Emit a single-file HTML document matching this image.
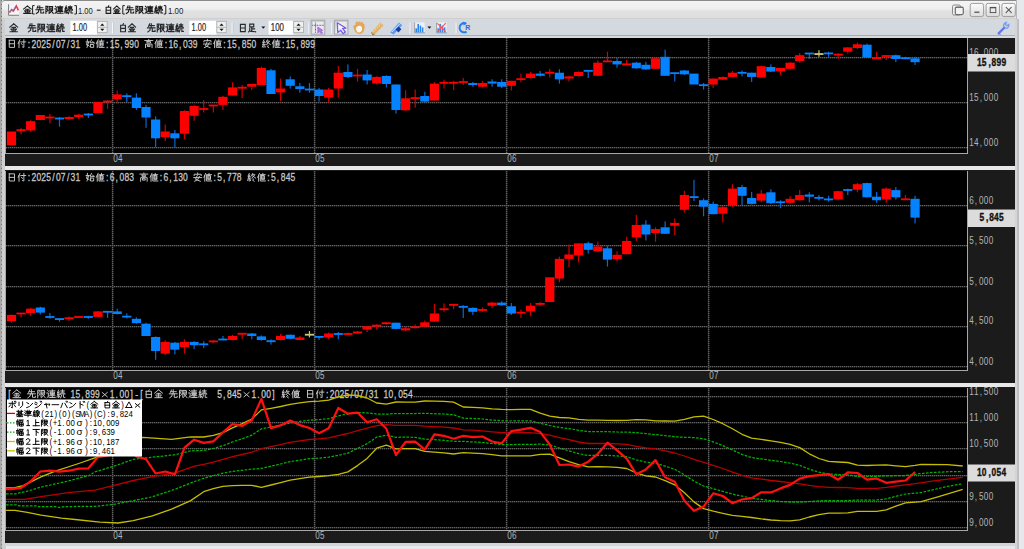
<!DOCTYPE html>
<html><head><meta charset="utf-8"><style>
*{margin:0;padding:0;box-sizing:border-box}
html,body{width:1024px;height:549px;overflow:hidden;background:#e6e8ec;font-family:"Liberation Sans",sans-serif}
.a{position:absolute}
</style></head><body>
<div class="a" style="left:0;top:0;width:1px;height:549px;background:#a8a8a8"></div>
<div class="a" style="left:1px;top:0;width:1px;height:549px;background:repeating-linear-gradient(180deg,#6878b8 0 1px,#a0b0c0 1px 2px,#c0b070 2px 3px,#a8a8a8 3px 4px)"></div>
<div class="a" style="left:2px;top:19px;width:4px;height:530px;background:#cfcfcf"></div>
<div class="a" style="left:2px;top:0;width:1014px;height:19px;background:linear-gradient(#f3f3f3 0,#efefef 45%,#e2e2e2 55%,#dedede 92%,#c8c8c8 100%);border-top:1px solid #8a8a8a;border-radius:3px 0 0 0"></div>
<div class="a" style="left:5px;top:19px;width:1011px;height:19px;background:#d4d9e0;border-bottom:3px solid #d6dadf"></div>
<div class="a" style="left:5px;top:35px;width:1011px;height:1px;background:#a6aeb8"></div>
<div class="a" style="left:5px;top:38px;width:1010px;height:505px;background:#1b1b1b"></div>
<div class="a" style="left:5px;top:166px;width:1010px;height:4px;background:#e8e8e8"></div>
<div class="a" style="left:5px;top:383px;width:1010px;height:4px;background:#e8e8e8"></div>
<div class="a" style="left:1015px;top:19px;width:2px;height:530px;background:#d4d4d4"></div>
<div class="a" style="left:1016px;top:0;width:1px;height:19px;background:#b8b8b8"></div>
<div class="a" style="left:1017px;top:19px;width:2px;height:530px;background:#c0c0c4"></div>
<div class="a" style="left:5px;top:543px;width:1012px;height:3px;background:#d4d4d4"></div>
<svg class="a" style="left:0;top:0" width="1024" height="549" viewBox="0 0 1024 549">
<rect x="6" y="38" width="961" height="115" fill="#000"/>
<rect x="6" y="171" width="961" height="199" fill="#000"/>
<rect x="6" y="388" width="961" height="142" fill="#000"/>
<line x1="6" y1="57.6" x2="967" y2="57.6" stroke="#2c2c2c" stroke-width="1.4"/><line x1="6" y1="57.6" x2="967" y2="57.6" stroke="#626262" stroke-width="1.4" stroke-dasharray="1 1"/>
<line x1="6" y1="102.6" x2="967" y2="102.6" stroke="#2c2c2c" stroke-width="1.4"/><line x1="6" y1="102.6" x2="967" y2="102.6" stroke="#626262" stroke-width="1.4" stroke-dasharray="1 1"/>
<line x1="6" y1="147.6" x2="967" y2="147.6" stroke="#2c2c2c" stroke-width="1.4"/><line x1="6" y1="147.6" x2="967" y2="147.6" stroke="#626262" stroke-width="1.4" stroke-dasharray="1 1"/>
<line x1="6" y1="205.6" x2="967" y2="205.6" stroke="#2c2c2c" stroke-width="1.4"/><line x1="6" y1="205.6" x2="967" y2="205.6" stroke="#626262" stroke-width="1.4" stroke-dasharray="1 1"/>
<line x1="6" y1="245.6" x2="967" y2="245.6" stroke="#2c2c2c" stroke-width="1.4"/><line x1="6" y1="245.6" x2="967" y2="245.6" stroke="#626262" stroke-width="1.4" stroke-dasharray="1 1"/>
<line x1="6" y1="286.6" x2="967" y2="286.6" stroke="#2c2c2c" stroke-width="1.4"/><line x1="6" y1="286.6" x2="967" y2="286.6" stroke="#626262" stroke-width="1.4" stroke-dasharray="1 1"/>
<line x1="6" y1="326.6" x2="967" y2="326.6" stroke="#2c2c2c" stroke-width="1.4"/><line x1="6" y1="326.6" x2="967" y2="326.6" stroke="#626262" stroke-width="1.4" stroke-dasharray="1 1"/>
<line x1="6" y1="366.6" x2="967" y2="366.6" stroke="#2c2c2c" stroke-width="1.4"/><line x1="6" y1="366.6" x2="967" y2="366.6" stroke="#626262" stroke-width="1.4" stroke-dasharray="1 1"/>
<line x1="6" y1="396.6" x2="967" y2="396.6" stroke="#2c2c2c" stroke-width="1.4"/><line x1="6" y1="396.6" x2="967" y2="396.6" stroke="#626262" stroke-width="1.4" stroke-dasharray="1 1"/>
<line x1="6" y1="422.6" x2="967" y2="422.6" stroke="#2c2c2c" stroke-width="1.4"/><line x1="6" y1="422.6" x2="967" y2="422.6" stroke="#626262" stroke-width="1.4" stroke-dasharray="1 1"/>
<line x1="6" y1="448.6" x2="967" y2="448.6" stroke="#2c2c2c" stroke-width="1.4"/><line x1="6" y1="448.6" x2="967" y2="448.6" stroke="#626262" stroke-width="1.4" stroke-dasharray="1 1"/>
<line x1="6" y1="475.6" x2="967" y2="475.6" stroke="#2c2c2c" stroke-width="1.4"/><line x1="6" y1="475.6" x2="967" y2="475.6" stroke="#626262" stroke-width="1.4" stroke-dasharray="1 1"/>
<line x1="6" y1="501.6" x2="967" y2="501.6" stroke="#2c2c2c" stroke-width="1.4"/><line x1="6" y1="501.6" x2="967" y2="501.6" stroke="#626262" stroke-width="1.4" stroke-dasharray="1 1"/>
<line x1="6" y1="527.6" x2="967" y2="527.6" stroke="#2c2c2c" stroke-width="1.4"/><line x1="6" y1="527.6" x2="967" y2="527.6" stroke="#626262" stroke-width="1.4" stroke-dasharray="1 1"/>
<line x1="112.6" y1="38" x2="112.6" y2="153" stroke="#2c2c2c" stroke-width="1.4"/><line x1="112.6" y1="38" x2="112.6" y2="153" stroke="#626262" stroke-width="1.4" stroke-dasharray="1 1"/>
<line x1="112.6" y1="171" x2="112.6" y2="370" stroke="#2c2c2c" stroke-width="1.4"/><line x1="112.6" y1="171" x2="112.6" y2="370" stroke="#626262" stroke-width="1.4" stroke-dasharray="1 1"/>
<line x1="112.6" y1="388" x2="112.6" y2="530" stroke="#2c2c2c" stroke-width="1.4"/><line x1="112.6" y1="388" x2="112.6" y2="530" stroke="#626262" stroke-width="1.4" stroke-dasharray="1 1"/>
<line x1="314.6" y1="38" x2="314.6" y2="153" stroke="#2c2c2c" stroke-width="1.4"/><line x1="314.6" y1="38" x2="314.6" y2="153" stroke="#626262" stroke-width="1.4" stroke-dasharray="1 1"/>
<line x1="314.6" y1="171" x2="314.6" y2="370" stroke="#2c2c2c" stroke-width="1.4"/><line x1="314.6" y1="171" x2="314.6" y2="370" stroke="#626262" stroke-width="1.4" stroke-dasharray="1 1"/>
<line x1="314.6" y1="388" x2="314.6" y2="530" stroke="#2c2c2c" stroke-width="1.4"/><line x1="314.6" y1="388" x2="314.6" y2="530" stroke="#626262" stroke-width="1.4" stroke-dasharray="1 1"/>
<line x1="506.6" y1="38" x2="506.6" y2="153" stroke="#2c2c2c" stroke-width="1.4"/><line x1="506.6" y1="38" x2="506.6" y2="153" stroke="#626262" stroke-width="1.4" stroke-dasharray="1 1"/>
<line x1="506.6" y1="171" x2="506.6" y2="370" stroke="#2c2c2c" stroke-width="1.4"/><line x1="506.6" y1="171" x2="506.6" y2="370" stroke="#626262" stroke-width="1.4" stroke-dasharray="1 1"/>
<line x1="506.6" y1="388" x2="506.6" y2="530" stroke="#2c2c2c" stroke-width="1.4"/><line x1="506.6" y1="388" x2="506.6" y2="530" stroke="#626262" stroke-width="1.4" stroke-dasharray="1 1"/>
<line x1="708.6" y1="38" x2="708.6" y2="153" stroke="#2c2c2c" stroke-width="1.4"/><line x1="708.6" y1="38" x2="708.6" y2="153" stroke="#626262" stroke-width="1.4" stroke-dasharray="1 1"/>
<line x1="708.6" y1="171" x2="708.6" y2="370" stroke="#2c2c2c" stroke-width="1.4"/><line x1="708.6" y1="171" x2="708.6" y2="370" stroke="#626262" stroke-width="1.4" stroke-dasharray="1 1"/>
<line x1="708.6" y1="388" x2="708.6" y2="530" stroke="#2c2c2c" stroke-width="1.4"/><line x1="708.6" y1="388" x2="708.6" y2="530" stroke="#626262" stroke-width="1.4" stroke-dasharray="1 1"/>
<rect x="5" y="38" width="1" height="116" fill="#a8a8a8"/><rect x="967" y="38" width="1" height="116" fill="#a8a8a8"/><rect x="5" y="153" width="963" height="1" fill="#a8a8a8"/>
<rect x="5" y="171" width="1" height="200" fill="#a8a8a8"/><rect x="967" y="171" width="1" height="200" fill="#a8a8a8"/><rect x="5" y="370" width="963" height="1" fill="#a8a8a8"/>
<rect x="5" y="388" width="1" height="143" fill="#a8a8a8"/><rect x="967" y="388" width="1" height="143" fill="#a8a8a8"/><rect x="5" y="530" width="963" height="1" fill="#a8a8a8"/>
<rect x="6.85" y="131.50" width="9.2" height="13.80" fill="#ff0000"/>
<rect x="20.46" y="127.80" width="1.2" height="6.60" fill="#d00000"/>
<rect x="16.46" y="129.25" width="9.2" height="1.80" fill="#ff0000"/>
<rect x="30.07" y="120.20" width="1.2" height="11.50" fill="#d00000"/>
<rect x="26.07" y="121.20" width="9.2" height="9.20" fill="#ff0000"/>
<rect x="35.69" y="115.00" width="9.2" height="5.00" fill="#ff0000"/>
<rect x="49.30" y="114.00" width="1.2" height="9.40" fill="#d00000"/>
<rect x="45.30" y="116.60" width="9.2" height="1.80" fill="#ff0000"/>
<rect x="58.91" y="117.00" width="1.2" height="9.70" fill="#0868d8"/>
<rect x="54.91" y="117.60" width="9.2" height="1.80" fill="#0582ff"/>
<rect x="68.52" y="116.00" width="1.2" height="4.00" fill="#d00000"/>
<rect x="64.52" y="117.00" width="9.2" height="2.00" fill="#ff0000"/>
<rect x="78.14" y="114.00" width="1.2" height="5.00" fill="#d00000"/>
<rect x="74.14" y="114.70" width="9.2" height="2.30" fill="#ff0000"/>
<rect x="87.75" y="113.00" width="1.2" height="5.00" fill="#0868d8"/>
<rect x="83.75" y="113.60" width="9.2" height="1.80" fill="#0582ff"/>
<rect x="93.36" y="102.00" width="9.2" height="11.00" fill="#ff0000"/>
<rect x="106.98" y="100.00" width="1.2" height="8.80" fill="#d00000"/>
<rect x="102.98" y="100.60" width="9.2" height="1.80" fill="#ff0000"/>
<rect x="116.59" y="90.60" width="1.2" height="12.70" fill="#d00000"/>
<rect x="112.59" y="94.40" width="9.2" height="5.00" fill="#ff0000"/>
<rect x="126.20" y="93.30" width="1.2" height="8.70" fill="#0868d8"/>
<rect x="122.20" y="95.25" width="9.2" height="1.80" fill="#0582ff"/>
<rect x="135.82" y="93.30" width="1.2" height="16.60" fill="#0868d8"/>
<rect x="131.82" y="97.60" width="9.2" height="10.40" fill="#0582ff"/>
<rect x="145.43" y="104.80" width="1.2" height="23.00" fill="#0868d8"/>
<rect x="141.43" y="107.00" width="9.2" height="10.50" fill="#0582ff"/>
<rect x="155.04" y="116.40" width="1.2" height="30.60" fill="#0868d8"/>
<rect x="151.04" y="119.50" width="9.2" height="18.80" fill="#0582ff"/>
<rect x="164.65" y="124.50" width="1.2" height="16.50" fill="#d00000"/>
<rect x="160.65" y="131.50" width="9.2" height="5.70" fill="#ff0000"/>
<rect x="174.27" y="130.00" width="1.2" height="18.00" fill="#0868d8"/>
<rect x="170.27" y="133.30" width="9.2" height="5.00" fill="#0582ff"/>
<rect x="183.88" y="110.30" width="1.2" height="28.90" fill="#d00000"/>
<rect x="179.88" y="111.00" width="9.2" height="22.70" fill="#ff0000"/>
<rect x="193.49" y="104.80" width="1.2" height="16.00" fill="#d00000"/>
<rect x="189.49" y="106.00" width="9.2" height="9.80" fill="#ff0000"/>
<rect x="203.11" y="100.00" width="1.2" height="12.50" fill="#d00000"/>
<rect x="199.11" y="108.10" width="9.2" height="1.80" fill="#ff0000"/>
<rect x="212.72" y="105.00" width="1.2" height="7.50" fill="#d00000"/>
<rect x="208.72" y="104.60" width="9.2" height="1.80" fill="#ff0000"/>
<rect x="222.33" y="96.00" width="1.2" height="14.00" fill="#d00000"/>
<rect x="218.33" y="96.80" width="9.2" height="8.10" fill="#ff0000"/>
<rect x="231.95" y="82.30" width="1.2" height="13.20" fill="#d00000"/>
<rect x="227.95" y="87.40" width="9.2" height="8.10" fill="#ff0000"/>
<rect x="241.56" y="85.00" width="1.2" height="13.00" fill="#d00000"/>
<rect x="237.56" y="86.80" width="9.2" height="1.80" fill="#ff0000"/>
<rect x="251.17" y="84.00" width="1.2" height="6.00" fill="#d00000"/>
<rect x="247.17" y="84.00" width="9.2" height="2.70" fill="#ff0000"/>
<rect x="260.78" y="66.60" width="1.2" height="18.40" fill="#d00000"/>
<rect x="256.78" y="68.00" width="9.2" height="17.00" fill="#ff0000"/>
<rect x="270.40" y="68.80" width="1.2" height="25.20" fill="#0868d8"/>
<rect x="266.40" y="70.30" width="9.2" height="23.70" fill="#0582ff"/>
<rect x="280.01" y="78.60" width="1.2" height="22.40" fill="#d00000"/>
<rect x="276.01" y="88.50" width="9.2" height="3.90" fill="#ff0000"/>
<rect x="289.62" y="76.40" width="1.2" height="12.10" fill="#0868d8"/>
<rect x="285.62" y="79.30" width="9.2" height="6.50" fill="#0582ff"/>
<rect x="299.24" y="83.00" width="1.2" height="9.80" fill="#0868d8"/>
<rect x="295.24" y="86.30" width="9.2" height="2.70" fill="#0582ff"/>
<rect x="308.85" y="83.00" width="1.2" height="9.80" fill="#0868d8"/>
<rect x="304.85" y="88.60" width="9.2" height="1.80" fill="#0582ff"/>
<rect x="318.46" y="87.80" width="1.2" height="13.80" fill="#0868d8"/>
<rect x="314.46" y="89.50" width="9.2" height="6.50" fill="#0582ff"/>
<rect x="328.08" y="87.80" width="1.2" height="14.90" fill="#d00000"/>
<rect x="324.08" y="89.50" width="9.2" height="8.10" fill="#ff0000"/>
<rect x="337.69" y="66.00" width="1.2" height="31.60" fill="#d00000"/>
<rect x="333.69" y="72.70" width="9.2" height="15.80" fill="#ff0000"/>
<rect x="347.30" y="64.40" width="1.2" height="13.60" fill="#0868d8"/>
<rect x="343.30" y="72.00" width="9.2" height="5.00" fill="#0582ff"/>
<rect x="356.91" y="68.80" width="1.2" height="12.70" fill="#d00000"/>
<rect x="352.91" y="74.60" width="9.2" height="1.80" fill="#ff0000"/>
<rect x="366.53" y="70.00" width="1.2" height="14.50" fill="#0868d8"/>
<rect x="362.53" y="74.50" width="9.2" height="5.90" fill="#0582ff"/>
<rect x="376.14" y="76.40" width="1.2" height="8.10" fill="#d00000"/>
<rect x="372.14" y="76.90" width="9.2" height="6.50" fill="#ff0000"/>
<rect x="385.75" y="75.30" width="1.2" height="12.10" fill="#0868d8"/>
<rect x="381.75" y="76.00" width="9.2" height="8.00" fill="#0582ff"/>
<rect x="395.37" y="84.50" width="1.2" height="29.10" fill="#0868d8"/>
<rect x="391.37" y="84.50" width="9.2" height="25.50" fill="#0582ff"/>
<rect x="404.98" y="90.20" width="1.2" height="20.80" fill="#d00000"/>
<rect x="400.98" y="98.30" width="9.2" height="12.00" fill="#ff0000"/>
<rect x="414.59" y="89.50" width="1.2" height="18.20" fill="#d00000"/>
<rect x="410.59" y="97.20" width="9.2" height="1.80" fill="#ff0000"/>
<rect x="424.21" y="91.70" width="1.2" height="11.00" fill="#0868d8"/>
<rect x="420.21" y="96.00" width="9.2" height="5.60" fill="#0582ff"/>
<rect x="433.82" y="82.30" width="1.2" height="18.20" fill="#d00000"/>
<rect x="429.82" y="83.60" width="9.2" height="16.90" fill="#ff0000"/>
<rect x="443.43" y="79.70" width="1.2" height="8.80" fill="#d00000"/>
<rect x="439.43" y="81.90" width="9.2" height="1.80" fill="#ff0000"/>
<rect x="453.04" y="80.80" width="1.2" height="9.40" fill="#d00000"/>
<rect x="449.04" y="81.90" width="9.2" height="1.80" fill="#ff0000"/>
<rect x="462.66" y="78.00" width="1.2" height="7.00" fill="#d00000"/>
<rect x="458.66" y="81.10" width="9.2" height="1.80" fill="#ff0000"/>
<rect x="472.27" y="82.00" width="1.2" height="4.70" fill="#0868d8"/>
<rect x="468.27" y="83.00" width="9.2" height="2.00" fill="#0582ff"/>
<rect x="481.88" y="80.80" width="1.2" height="6.60" fill="#d00000"/>
<rect x="477.88" y="83.00" width="9.2" height="3.70" fill="#ff0000"/>
<rect x="491.50" y="79.30" width="1.2" height="7.40" fill="#0868d8"/>
<rect x="487.50" y="81.50" width="9.2" height="2.10" fill="#0582ff"/>
<rect x="501.11" y="79.30" width="1.2" height="8.70" fill="#0868d8"/>
<rect x="497.11" y="82.00" width="9.2" height="4.70" fill="#0582ff"/>
<rect x="510.72" y="80.80" width="1.2" height="9.80" fill="#d00000"/>
<rect x="506.72" y="80.80" width="9.2" height="5.00" fill="#ff0000"/>
<rect x="520.34" y="73.60" width="1.2" height="8.70" fill="#d00000"/>
<rect x="516.34" y="78.25" width="9.2" height="1.80" fill="#ff0000"/>
<rect x="529.95" y="72.00" width="1.2" height="6.60" fill="#d00000"/>
<rect x="525.95" y="73.60" width="9.2" height="4.40" fill="#ff0000"/>
<rect x="539.56" y="71.00" width="1.2" height="5.40" fill="#0868d8"/>
<rect x="535.56" y="73.60" width="9.2" height="2.20" fill="#0582ff"/>
<rect x="549.17" y="68.80" width="1.2" height="8.70" fill="#d00000"/>
<rect x="545.17" y="71.90" width="9.2" height="1.80" fill="#ff0000"/>
<rect x="558.79" y="69.20" width="1.2" height="14.40" fill="#0868d8"/>
<rect x="554.79" y="72.70" width="9.2" height="6.60" fill="#0582ff"/>
<rect x="568.40" y="76.40" width="1.2" height="5.10" fill="#d00000"/>
<rect x="564.40" y="76.40" width="9.2" height="2.20" fill="#ff0000"/>
<rect x="578.01" y="71.40" width="1.2" height="5.00" fill="#d00000"/>
<rect x="574.01" y="72.00" width="9.2" height="4.00" fill="#ff0000"/>
<rect x="587.63" y="70.00" width="1.2" height="8.00" fill="#0868d8"/>
<rect x="583.63" y="69.95" width="9.2" height="1.80" fill="#0582ff"/>
<rect x="597.24" y="60.50" width="1.2" height="15.30" fill="#d00000"/>
<rect x="593.24" y="62.70" width="9.2" height="13.10" fill="#ff0000"/>
<rect x="606.85" y="51.70" width="1.2" height="10.50" fill="#d00000"/>
<rect x="602.85" y="60.45" width="9.2" height="1.80" fill="#ff0000"/>
<rect x="616.47" y="58.30" width="1.2" height="9.40" fill="#0868d8"/>
<rect x="612.47" y="61.00" width="9.2" height="3.40" fill="#0582ff"/>
<rect x="626.08" y="60.00" width="1.2" height="5.50" fill="#d00000"/>
<rect x="622.08" y="63.40" width="9.2" height="1.80" fill="#ff0000"/>
<rect x="635.69" y="61.80" width="1.2" height="7.00" fill="#0868d8"/>
<rect x="631.69" y="62.70" width="9.2" height="5.60" fill="#0582ff"/>
<rect x="645.30" y="61.80" width="1.2" height="8.20" fill="#0868d8"/>
<rect x="641.30" y="64.80" width="9.2" height="4.60" fill="#0582ff"/>
<rect x="654.92" y="57.90" width="1.2" height="10.90" fill="#d00000"/>
<rect x="650.92" y="58.30" width="9.2" height="10.50" fill="#ff0000"/>
<rect x="664.53" y="49.60" width="1.2" height="26.20" fill="#0868d8"/>
<rect x="660.53" y="56.80" width="9.2" height="19.00" fill="#0582ff"/>
<rect x="674.14" y="72.70" width="1.2" height="8.80" fill="#0868d8"/>
<rect x="670.14" y="72.25" width="9.2" height="1.80" fill="#0582ff"/>
<rect x="683.76" y="70.00" width="1.2" height="5.00" fill="#0868d8"/>
<rect x="679.76" y="70.50" width="9.2" height="3.80" fill="#0582ff"/>
<rect x="689.37" y="73.60" width="9.2" height="10.90" fill="#0582ff"/>
<rect x="702.98" y="83.00" width="1.2" height="6.50" fill="#0868d8"/>
<rect x="698.98" y="84.25" width="9.2" height="1.80" fill="#0582ff"/>
<rect x="712.60" y="78.60" width="1.2" height="9.40" fill="#d00000"/>
<rect x="708.60" y="78.60" width="9.2" height="5.90" fill="#ff0000"/>
<rect x="722.21" y="76.40" width="1.2" height="3.60" fill="#d00000"/>
<rect x="718.21" y="77.00" width="9.2" height="2.70" fill="#ff0000"/>
<rect x="731.82" y="71.00" width="1.2" height="5.90" fill="#d00000"/>
<rect x="727.82" y="72.70" width="9.2" height="4.20" fill="#ff0000"/>
<rect x="741.43" y="70.50" width="1.2" height="5.90" fill="#0868d8"/>
<rect x="737.43" y="71.90" width="9.2" height="1.80" fill="#0582ff"/>
<rect x="751.05" y="72.70" width="1.2" height="9.30" fill="#0868d8"/>
<rect x="747.05" y="72.70" width="9.2" height="4.20" fill="#0582ff"/>
<rect x="760.66" y="65.50" width="1.2" height="12.00" fill="#d00000"/>
<rect x="756.66" y="66.20" width="9.2" height="11.30" fill="#ff0000"/>
<rect x="770.27" y="64.40" width="1.2" height="7.60" fill="#0868d8"/>
<rect x="766.27" y="67.00" width="9.2" height="4.60" fill="#0582ff"/>
<rect x="779.89" y="68.00" width="1.2" height="7.00" fill="#d00000"/>
<rect x="775.89" y="68.00" width="9.2" height="3.40" fill="#ff0000"/>
<rect x="789.50" y="62.20" width="1.2" height="7.00" fill="#d00000"/>
<rect x="785.50" y="62.70" width="9.2" height="6.10" fill="#ff0000"/>
<rect x="799.11" y="53.00" width="1.2" height="9.70" fill="#d00000"/>
<rect x="795.11" y="55.20" width="9.2" height="5.80" fill="#ff0000"/>
<rect x="808.73" y="53.00" width="1.2" height="6.00" fill="#0868d8"/>
<rect x="804.73" y="52.60" width="9.2" height="1.80" fill="#0582ff"/>
<rect x="818.34" y="50.20" width="1.2" height="6.60" fill="#c8c87a"/>
<rect x="814.34" y="53.15" width="9.2" height="1.80" fill="#c8c87a"/>
<rect x="827.95" y="51.70" width="1.2" height="5.10" fill="#0868d8"/>
<rect x="823.95" y="52.50" width="9.2" height="1.80" fill="#0582ff"/>
<rect x="837.56" y="53.50" width="1.2" height="5.50" fill="#d00000"/>
<rect x="833.56" y="53.70" width="9.2" height="1.80" fill="#ff0000"/>
<rect x="847.18" y="47.40" width="1.2" height="6.10" fill="#d00000"/>
<rect x="843.18" y="47.40" width="9.2" height="4.30" fill="#ff0000"/>
<rect x="856.79" y="42.60" width="1.2" height="6.40" fill="#d00000"/>
<rect x="852.79" y="44.30" width="9.2" height="3.70" fill="#ff0000"/>
<rect x="866.40" y="43.60" width="1.2" height="14.30" fill="#0868d8"/>
<rect x="862.40" y="44.70" width="9.2" height="12.70" fill="#0582ff"/>
<rect x="876.02" y="51.70" width="1.2" height="6.80" fill="#d00000"/>
<rect x="872.02" y="57.30" width="9.2" height="1.80" fill="#ff0000"/>
<rect x="885.63" y="55.20" width="1.2" height="4.80" fill="#d00000"/>
<rect x="881.63" y="55.10" width="9.2" height="1.80" fill="#ff0000"/>
<rect x="895.24" y="54.60" width="1.2" height="7.60" fill="#0868d8"/>
<rect x="891.24" y="55.20" width="9.2" height="3.80" fill="#0582ff"/>
<rect x="904.86" y="56.80" width="1.2" height="2.40" fill="#0868d8"/>
<rect x="900.86" y="57.40" width="9.2" height="1.80" fill="#0582ff"/>
<rect x="914.47" y="56.80" width="1.2" height="8.20" fill="#0868d8"/>
<rect x="910.47" y="58.30" width="9.2" height="3.90" fill="#0582ff"/>
<rect x="10.85" y="314.50" width="1.2" height="8.20" fill="#d00000"/>
<rect x="6.85" y="314.90" width="9.2" height="6.30" fill="#ff0000"/>
<rect x="20.46" y="313.00" width="1.2" height="4.30" fill="#d00000"/>
<rect x="16.46" y="312.60" width="9.2" height="1.80" fill="#ff0000"/>
<rect x="30.07" y="308.00" width="1.2" height="8.00" fill="#d00000"/>
<rect x="26.07" y="308.70" width="9.2" height="4.30" fill="#ff0000"/>
<rect x="39.69" y="306.70" width="1.2" height="7.80" fill="#0868d8"/>
<rect x="35.69" y="307.50" width="9.2" height="5.10" fill="#0582ff"/>
<rect x="49.30" y="313.00" width="1.2" height="5.80" fill="#0868d8"/>
<rect x="45.30" y="316.10" width="9.2" height="1.80" fill="#0582ff"/>
<rect x="58.91" y="317.90" width="1.2" height="3.90" fill="#0868d8"/>
<rect x="54.91" y="318.20" width="9.2" height="1.80" fill="#0582ff"/>
<rect x="68.52" y="316.50" width="1.2" height="4.70" fill="#d00000"/>
<rect x="64.52" y="317.30" width="9.2" height="1.90" fill="#ff0000"/>
<rect x="74.14" y="316.10" width="9.2" height="1.80" fill="#ff0000"/>
<rect x="87.75" y="315.90" width="1.2" height="2.90" fill="#0868d8"/>
<rect x="83.75" y="316.10" width="9.2" height="1.80" fill="#0582ff"/>
<rect x="97.36" y="311.00" width="1.2" height="6.30" fill="#d00000"/>
<rect x="93.36" y="311.40" width="9.2" height="5.50" fill="#ff0000"/>
<rect x="106.98" y="311.40" width="1.2" height="6.50" fill="#0868d8"/>
<rect x="102.98" y="310.90" width="9.2" height="1.80" fill="#0582ff"/>
<rect x="116.59" y="308.70" width="1.2" height="5.80" fill="#0868d8"/>
<rect x="112.59" y="311.40" width="9.2" height="2.60" fill="#0582ff"/>
<rect x="126.20" y="313.40" width="1.2" height="5.00" fill="#0868d8"/>
<rect x="122.20" y="315.75" width="9.2" height="1.80" fill="#0582ff"/>
<rect x="135.82" y="317.30" width="1.2" height="6.40" fill="#0868d8"/>
<rect x="131.82" y="318.80" width="9.2" height="4.30" fill="#0582ff"/>
<rect x="145.43" y="322.70" width="1.2" height="13.30" fill="#0868d8"/>
<rect x="141.43" y="323.70" width="9.2" height="12.30" fill="#0582ff"/>
<rect x="155.04" y="336.40" width="1.2" height="23.40" fill="#0868d8"/>
<rect x="151.04" y="337.00" width="9.2" height="14.00" fill="#0582ff"/>
<rect x="164.65" y="340.30" width="1.2" height="14.70" fill="#d00000"/>
<rect x="160.65" y="341.90" width="9.2" height="11.70" fill="#ff0000"/>
<rect x="174.27" y="341.90" width="1.2" height="12.50" fill="#0868d8"/>
<rect x="170.27" y="342.70" width="9.2" height="7.00" fill="#0582ff"/>
<rect x="183.88" y="339.30" width="1.2" height="14.30" fill="#d00000"/>
<rect x="179.88" y="341.90" width="9.2" height="5.20" fill="#ff0000"/>
<rect x="193.49" y="341.30" width="1.2" height="7.70" fill="#0868d8"/>
<rect x="189.49" y="341.90" width="9.2" height="3.30" fill="#0582ff"/>
<rect x="203.11" y="341.30" width="1.2" height="6.70" fill="#0868d8"/>
<rect x="199.11" y="343.40" width="9.2" height="1.80" fill="#0582ff"/>
<rect x="212.72" y="340.30" width="1.2" height="2.90" fill="#d00000"/>
<rect x="208.72" y="340.50" width="9.2" height="1.80" fill="#ff0000"/>
<rect x="222.33" y="336.00" width="1.2" height="4.30" fill="#0868d8"/>
<rect x="218.33" y="338.60" width="9.2" height="1.80" fill="#0582ff"/>
<rect x="231.95" y="334.80" width="1.2" height="5.50" fill="#d00000"/>
<rect x="227.95" y="336.00" width="9.2" height="4.00" fill="#ff0000"/>
<rect x="241.56" y="332.90" width="1.2" height="6.40" fill="#d00000"/>
<rect x="237.56" y="332.85" width="9.2" height="1.80" fill="#ff0000"/>
<rect x="251.17" y="332.90" width="1.2" height="6.40" fill="#0868d8"/>
<rect x="247.17" y="333.50" width="9.2" height="2.50" fill="#0582ff"/>
<rect x="260.78" y="335.40" width="1.2" height="5.30" fill="#0868d8"/>
<rect x="256.78" y="336.40" width="9.2" height="3.60" fill="#0582ff"/>
<rect x="270.40" y="339.30" width="1.2" height="5.30" fill="#0868d8"/>
<rect x="266.40" y="340.30" width="9.2" height="1.80" fill="#0582ff"/>
<rect x="280.01" y="334.00" width="1.2" height="6.30" fill="#d00000"/>
<rect x="276.01" y="336.00" width="9.2" height="4.00" fill="#ff0000"/>
<rect x="289.62" y="334.50" width="1.2" height="4.80" fill="#0868d8"/>
<rect x="285.62" y="334.80" width="9.2" height="4.00" fill="#0582ff"/>
<rect x="299.24" y="336.00" width="1.2" height="4.30" fill="#d00000"/>
<rect x="295.24" y="337.40" width="9.2" height="2.60" fill="#ff0000"/>
<rect x="308.85" y="331.00" width="1.2" height="6.40" fill="#c8c87a"/>
<rect x="304.85" y="333.80" width="9.2" height="1.80" fill="#c8c87a"/>
<rect x="318.46" y="336.00" width="1.2" height="4.00" fill="#0868d8"/>
<rect x="314.46" y="336.00" width="9.2" height="1.80" fill="#0582ff"/>
<rect x="328.08" y="332.50" width="1.2" height="6.80" fill="#d00000"/>
<rect x="324.08" y="333.50" width="9.2" height="3.90" fill="#ff0000"/>
<rect x="337.69" y="332.00" width="1.2" height="7.30" fill="#0868d8"/>
<rect x="333.69" y="333.10" width="9.2" height="1.80" fill="#0582ff"/>
<rect x="347.30" y="332.50" width="1.2" height="2.50" fill="#d00000"/>
<rect x="343.30" y="333.10" width="9.2" height="1.80" fill="#ff0000"/>
<rect x="356.91" y="331.00" width="1.2" height="3.00" fill="#d00000"/>
<rect x="352.91" y="331.50" width="9.2" height="2.00" fill="#ff0000"/>
<rect x="366.53" y="325.70" width="1.2" height="6.30" fill="#d00000"/>
<rect x="362.53" y="326.30" width="9.2" height="3.30" fill="#ff0000"/>
<rect x="376.14" y="324.30" width="1.2" height="5.30" fill="#d00000"/>
<rect x="372.14" y="324.70" width="9.2" height="1.90" fill="#ff0000"/>
<rect x="385.75" y="322.30" width="1.2" height="2.40" fill="#d00000"/>
<rect x="381.75" y="322.30" width="9.2" height="1.80" fill="#ff0000"/>
<rect x="395.37" y="322.70" width="1.2" height="6.60" fill="#0868d8"/>
<rect x="391.37" y="322.70" width="9.2" height="6.20" fill="#0582ff"/>
<rect x="404.98" y="326.70" width="1.2" height="4.30" fill="#d00000"/>
<rect x="400.98" y="328.20" width="9.2" height="2.20" fill="#ff0000"/>
<rect x="414.59" y="324.50" width="1.2" height="3.70" fill="#d00000"/>
<rect x="410.59" y="326.35" width="9.2" height="1.80" fill="#ff0000"/>
<rect x="424.21" y="320.50" width="1.2" height="6.50" fill="#d00000"/>
<rect x="420.21" y="322.30" width="9.2" height="4.40" fill="#ff0000"/>
<rect x="433.82" y="304.00" width="1.2" height="17.60" fill="#d00000"/>
<rect x="429.82" y="313.50" width="9.2" height="8.10" fill="#ff0000"/>
<rect x="443.43" y="303.50" width="1.2" height="8.30" fill="#d00000"/>
<rect x="439.43" y="308.35" width="9.2" height="1.80" fill="#ff0000"/>
<rect x="453.04" y="304.00" width="1.2" height="5.20" fill="#d00000"/>
<rect x="449.04" y="303.95" width="9.2" height="1.80" fill="#ff0000"/>
<rect x="462.66" y="305.20" width="1.2" height="12.80" fill="#0868d8"/>
<rect x="458.66" y="305.95" width="9.2" height="1.80" fill="#0582ff"/>
<rect x="472.27" y="307.40" width="1.2" height="7.60" fill="#0868d8"/>
<rect x="468.27" y="307.90" width="9.2" height="3.90" fill="#0582ff"/>
<rect x="481.88" y="307.40" width="1.2" height="4.40" fill="#d00000"/>
<rect x="477.88" y="309.05" width="9.2" height="1.80" fill="#ff0000"/>
<rect x="491.50" y="302.00" width="1.2" height="5.90" fill="#d00000"/>
<rect x="487.50" y="302.60" width="9.2" height="3.10" fill="#ff0000"/>
<rect x="501.11" y="301.30" width="1.2" height="4.40" fill="#0868d8"/>
<rect x="497.11" y="302.60" width="9.2" height="2.60" fill="#0582ff"/>
<rect x="510.72" y="303.00" width="1.2" height="12.00" fill="#0868d8"/>
<rect x="506.72" y="306.30" width="9.2" height="7.20" fill="#0582ff"/>
<rect x="520.34" y="309.60" width="1.2" height="8.40" fill="#d00000"/>
<rect x="516.34" y="311.75" width="9.2" height="1.80" fill="#ff0000"/>
<rect x="529.95" y="303.00" width="1.2" height="13.20" fill="#d00000"/>
<rect x="525.95" y="305.70" width="9.2" height="5.70" fill="#ff0000"/>
<rect x="539.56" y="302.00" width="1.2" height="3.70" fill="#d00000"/>
<rect x="535.56" y="303.00" width="9.2" height="1.80" fill="#ff0000"/>
<rect x="545.17" y="277.30" width="9.2" height="24.70" fill="#ff0000"/>
<rect x="558.79" y="256.70" width="1.2" height="25.60" fill="#d00000"/>
<rect x="554.79" y="258.90" width="9.2" height="19.70" fill="#ff0000"/>
<rect x="568.40" y="244.50" width="1.2" height="22.50" fill="#d00000"/>
<rect x="564.40" y="254.50" width="9.2" height="4.40" fill="#ff0000"/>
<rect x="578.01" y="243.40" width="1.2" height="19.00" fill="#d00000"/>
<rect x="574.01" y="243.40" width="9.2" height="12.10" fill="#ff0000"/>
<rect x="587.63" y="241.70" width="1.2" height="11.80" fill="#0868d8"/>
<rect x="583.63" y="243.20" width="9.2" height="6.60" fill="#0582ff"/>
<rect x="597.24" y="241.70" width="1.2" height="10.30" fill="#d00000"/>
<rect x="593.24" y="246.50" width="9.2" height="4.80" fill="#ff0000"/>
<rect x="606.85" y="246.00" width="1.2" height="20.60" fill="#0868d8"/>
<rect x="602.85" y="248.30" width="9.2" height="11.30" fill="#0582ff"/>
<rect x="616.47" y="251.30" width="1.2" height="10.10" fill="#d00000"/>
<rect x="612.47" y="254.80" width="9.2" height="4.40" fill="#ff0000"/>
<rect x="626.08" y="236.70" width="1.2" height="17.50" fill="#d00000"/>
<rect x="622.08" y="241.00" width="9.2" height="13.20" fill="#ff0000"/>
<rect x="635.69" y="214.80" width="1.2" height="26.20" fill="#d00000"/>
<rect x="631.69" y="225.00" width="9.2" height="12.30" fill="#ff0000"/>
<rect x="645.30" y="220.30" width="1.2" height="20.10" fill="#0868d8"/>
<rect x="641.30" y="224.60" width="9.2" height="9.90" fill="#0582ff"/>
<rect x="654.92" y="227.30" width="1.2" height="14.40" fill="#d00000"/>
<rect x="650.92" y="229.00" width="9.2" height="4.00" fill="#ff0000"/>
<rect x="664.53" y="221.40" width="1.2" height="12.40" fill="#0868d8"/>
<rect x="660.53" y="227.30" width="9.2" height="6.50" fill="#0582ff"/>
<rect x="674.14" y="218.50" width="1.2" height="16.50" fill="#d00000"/>
<rect x="670.14" y="222.90" width="9.2" height="2.80" fill="#ff0000"/>
<rect x="683.76" y="190.80" width="1.2" height="21.80" fill="#d00000"/>
<rect x="679.76" y="195.00" width="9.2" height="14.80" fill="#ff0000"/>
<rect x="693.37" y="179.80" width="1.2" height="21.20" fill="#0868d8"/>
<rect x="689.37" y="196.20" width="9.2" height="1.80" fill="#0582ff"/>
<rect x="702.98" y="198.40" width="1.2" height="17.90" fill="#0868d8"/>
<rect x="698.98" y="200.20" width="9.2" height="6.50" fill="#0582ff"/>
<rect x="712.60" y="201.70" width="1.2" height="12.50" fill="#0868d8"/>
<rect x="708.60" y="203.90" width="9.2" height="10.30" fill="#0582ff"/>
<rect x="722.21" y="206.00" width="1.2" height="16.50" fill="#d00000"/>
<rect x="718.21" y="207.20" width="9.2" height="6.50" fill="#ff0000"/>
<rect x="731.82" y="184.20" width="1.2" height="23.00" fill="#d00000"/>
<rect x="727.82" y="188.60" width="9.2" height="16.80" fill="#ff0000"/>
<rect x="741.43" y="184.90" width="1.2" height="20.50" fill="#0868d8"/>
<rect x="737.43" y="187.00" width="9.2" height="8.80" fill="#0582ff"/>
<rect x="751.05" y="191.90" width="1.2" height="12.60" fill="#0868d8"/>
<rect x="747.05" y="198.00" width="9.2" height="5.90" fill="#0582ff"/>
<rect x="760.66" y="190.10" width="1.2" height="12.20" fill="#d00000"/>
<rect x="756.66" y="193.60" width="9.2" height="7.00" fill="#ff0000"/>
<rect x="770.27" y="189.20" width="1.2" height="14.70" fill="#0868d8"/>
<rect x="766.27" y="192.30" width="9.2" height="10.90" fill="#0582ff"/>
<rect x="779.89" y="200.20" width="1.2" height="8.00" fill="#0868d8"/>
<rect x="775.89" y="201.35" width="9.2" height="1.80" fill="#0582ff"/>
<rect x="789.50" y="196.20" width="1.2" height="7.70" fill="#d00000"/>
<rect x="785.50" y="198.80" width="9.2" height="4.00" fill="#ff0000"/>
<rect x="799.11" y="190.00" width="1.2" height="10.60" fill="#d00000"/>
<rect x="795.11" y="195.00" width="9.2" height="5.20" fill="#ff0000"/>
<rect x="808.73" y="192.30" width="1.2" height="10.00" fill="#0868d8"/>
<rect x="804.73" y="194.50" width="9.2" height="2.20" fill="#0582ff"/>
<rect x="818.34" y="195.00" width="1.2" height="5.20" fill="#0868d8"/>
<rect x="814.34" y="196.95" width="9.2" height="1.80" fill="#0582ff"/>
<rect x="827.95" y="195.80" width="1.2" height="5.90" fill="#0868d8"/>
<rect x="823.95" y="198.50" width="9.2" height="1.80" fill="#0582ff"/>
<rect x="837.56" y="190.80" width="1.2" height="9.40" fill="#d00000"/>
<rect x="833.56" y="191.20" width="9.2" height="8.30" fill="#ff0000"/>
<rect x="847.18" y="188.60" width="1.2" height="6.40" fill="#0868d8"/>
<rect x="843.18" y="189.10" width="9.2" height="1.80" fill="#0582ff"/>
<rect x="856.79" y="183.10" width="1.2" height="9.20" fill="#d00000"/>
<rect x="852.79" y="184.20" width="9.2" height="5.50" fill="#ff0000"/>
<rect x="866.40" y="182.70" width="1.2" height="14.60" fill="#0868d8"/>
<rect x="862.40" y="183.10" width="9.2" height="14.20" fill="#0582ff"/>
<rect x="876.02" y="191.90" width="1.2" height="10.90" fill="#0868d8"/>
<rect x="872.02" y="196.70" width="9.2" height="3.50" fill="#0582ff"/>
<rect x="885.63" y="187.50" width="1.2" height="15.30" fill="#d00000"/>
<rect x="881.63" y="188.60" width="9.2" height="10.90" fill="#ff0000"/>
<rect x="895.24" y="187.00" width="1.2" height="12.50" fill="#0868d8"/>
<rect x="891.24" y="190.10" width="9.2" height="7.20" fill="#0582ff"/>
<rect x="904.86" y="195.00" width="1.2" height="5.20" fill="#d00000"/>
<rect x="900.86" y="198.40" width="9.2" height="1.80" fill="#ff0000"/>
<rect x="914.47" y="195.80" width="1.2" height="27.70" fill="#0868d8"/>
<rect x="910.47" y="198.80" width="9.2" height="18.80" fill="#0582ff"/>
<path d="M9.25,40.24 L14.53,40.24 L14.53,47.38 L9.25,47.38 L9.25,40.24M9.25,43.77 L14.53,43.77" fill="none" stroke="#c8c8c8" stroke-width="0.95" stroke-linecap="square" stroke-linejoin="miter"/>
<path d="M19.91,39.82 L18.15,43.60M19.03,41.92 L19.03,47.63M20.79,41.92 L25.63,41.92M23.87,39.82 L23.87,47.38 L22.55,46.96M21.49,43.60 L22.37,44.86" fill="none" stroke="#c8c8c8" stroke-width="0.95" stroke-linecap="square" stroke-linejoin="miter"/>
<text stroke="#c8c8c8" stroke-width="0.3" transform="scale(0.76,1)" x="38.16 44.59 51.02 57.46 63.89 70.32 76.76 83.19 89.62 96.05 102.49" y="47.60" text-anchor="middle" font-family="Liberation Sans" font-size="11.20" font-weight="normal" fill="#c8c8c8">:2025/07/31</text>
<path d="M87.47,39.82 L86.77,44.86M86.15,41.92 L89.23,41.92M88.70,41.92 L87.03,47.38M87.03,44.44 L89.23,46.12M91.43,39.82 L90.11,42.76 L94.07,42.76M92.75,41.50 L94.07,43.18M90.55,44.44 L93.63,44.44 L93.63,47.38 L90.55,47.38 L90.55,44.44" fill="none" stroke="#c8c8c8" stroke-width="0.95" stroke-linecap="square" stroke-linejoin="miter"/>
<path d="M98.13,39.82 L96.37,43.60M97.25,41.92 L97.25,47.63M99.01,41.08 L103.85,41.08M101.48,39.82 L101.48,41.08M100.33,41.92 L102.97,41.92 L102.97,46.12 L100.33,46.12 L100.33,41.92M100.33,43.35 L102.97,43.35M100.33,44.69 L102.97,44.69M99.01,41.92 L99.01,47.38 L104.12,47.38" fill="none" stroke="#c8c8c8" stroke-width="0.95" stroke-linecap="square" stroke-linejoin="miter"/>
<text stroke="#c8c8c8" stroke-width="0.3" transform="scale(0.76,1)" x="141.08 147.52 153.95 159.86 166.82 173.25 179.68" y="47.60" text-anchor="middle" font-family="Liberation Sans" font-size="11.20" font-weight="normal" fill="#c8c8c8">:15,990</text>
<path d="M148.78,39.40 L148.78,40.49M144.82,40.49 L152.74,40.49M147.02,41.58 L150.54,41.58 L150.54,43.01 L147.02,43.01 L147.02,41.58M145.52,47.63 L145.52,44.10 L152.04,44.10 L152.04,47.63M147.46,45.11 L150.10,45.11 L150.10,46.54 L147.46,46.54 L147.46,45.11" fill="none" stroke="#c8c8c8" stroke-width="0.95" stroke-linecap="square" stroke-linejoin="miter"/>
<path d="M156.80,39.82 L155.04,43.60M155.92,41.92 L155.92,47.63M157.68,41.08 L162.52,41.08M160.14,39.82 L160.14,41.08M159.00,41.92 L161.64,41.92 L161.64,46.12 L159.00,46.12 L159.00,41.92M159.00,43.35 L161.64,43.35M159.00,44.69 L161.64,44.69M157.68,41.92 L157.68,47.38 L162.78,47.38" fill="none" stroke="#c8c8c8" stroke-width="0.95" stroke-linecap="square" stroke-linejoin="miter"/>
<text stroke="#c8c8c8" stroke-width="0.3" transform="scale(0.76,1)" x="218.28 224.71 231.15 237.05 244.01 250.44 256.88" y="47.60" text-anchor="middle" font-family="Liberation Sans" font-size="11.20" font-weight="normal" fill="#c8c8c8">:16,039</text>
<path d="M207.45,39.40 L207.45,40.49M203.93,41.92 L203.93,40.66 L210.97,40.66 L210.97,41.92M203.49,44.02 L211.41,44.02M207.01,41.92 L205.25,45.70 L210.09,47.63M209.21,42.76 L207.45,46.12 L204.37,47.63" fill="none" stroke="#c8c8c8" stroke-width="0.95" stroke-linecap="square" stroke-linejoin="miter"/>
<path d="M215.47,39.82 L213.71,43.60M214.59,41.92 L214.59,47.63M216.35,41.08 L221.19,41.08M218.81,39.82 L218.81,41.08M217.67,41.92 L220.31,41.92 L220.31,46.12 L217.67,46.12 L217.67,41.92M217.67,43.35 L220.31,43.35M217.67,44.69 L220.31,44.69M216.35,41.92 L216.35,47.38 L221.45,47.38" fill="none" stroke="#c8c8c8" stroke-width="0.95" stroke-linecap="square" stroke-linejoin="miter"/>
<text stroke="#c8c8c8" stroke-width="0.3" transform="scale(0.76,1)" x="295.47 301.91 308.34 314.25 321.21 327.64 334.07" y="47.60" text-anchor="middle" font-family="Liberation Sans" font-size="11.20" font-weight="normal" fill="#c8c8c8">:15,850</text>
<path d="M263.92,39.82 L262.60,42.76 L264.80,42.76M264.36,41.33 L262.60,44.86 L265.24,44.44M263.92,44.44 L263.92,47.38M262.60,45.95 L262.42,46.96M264.88,45.95 L265.24,46.96M267.44,39.82 L266.12,42.34M267.00,41.08 L269.64,41.08 L266.56,44.44M267.44,42.34 L270.34,44.44M267.70,45.11 L268.41,45.78M267.17,46.46 L268.76,47.63" fill="none" stroke="#c8c8c8" stroke-width="0.95" stroke-linecap="square" stroke-linejoin="miter"/>
<path d="M274.13,39.82 L272.37,43.60M273.25,41.92 L273.25,47.63M275.01,41.08 L279.86,41.08M277.48,39.82 L277.48,41.08M276.34,41.92 L278.98,41.92 L278.98,46.12 L276.34,46.12 L276.34,41.92M276.34,43.35 L278.98,43.35M276.34,44.69 L278.98,44.69M275.01,41.92 L275.01,47.38 L280.12,47.38" fill="none" stroke="#c8c8c8" stroke-width="0.95" stroke-linecap="square" stroke-linejoin="miter"/>
<text stroke="#c8c8c8" stroke-width="0.3" transform="scale(0.76,1)" x="372.67 379.10 385.53 391.44 398.40 404.83 411.27" y="47.60" text-anchor="middle" font-family="Liberation Sans" font-size="11.20" font-weight="normal" fill="#c8c8c8">:15,899</text>
<path d="M9.25,173.84 L14.53,173.84 L14.53,180.98 L9.25,180.98 L9.25,173.84M9.25,177.37 L14.53,177.37" fill="none" stroke="#c8c8c8" stroke-width="0.95" stroke-linecap="square" stroke-linejoin="miter"/>
<path d="M19.91,173.42 L18.15,177.20M19.03,175.52 L19.03,181.23M20.79,175.52 L25.63,175.52M23.87,173.42 L23.87,180.98 L22.55,180.56M21.49,177.20 L22.37,178.46" fill="none" stroke="#c8c8c8" stroke-width="0.95" stroke-linecap="square" stroke-linejoin="miter"/>
<text stroke="#c8c8c8" stroke-width="0.3" transform="scale(0.76,1)" x="38.16 44.59 51.02 57.46 63.89 70.32 76.76 83.19 89.62 96.05 102.49" y="181.20" text-anchor="middle" font-family="Liberation Sans" font-size="11.20" font-weight="normal" fill="#c8c8c8">:2025/07/31</text>
<path d="M87.47,173.42 L86.77,178.46M86.15,175.52 L89.23,175.52M88.70,175.52 L87.03,180.98M87.03,178.04 L89.23,179.72M91.43,173.42 L90.11,176.36 L94.07,176.36M92.75,175.10 L94.07,176.78M90.55,178.04 L93.63,178.04 L93.63,180.98 L90.55,180.98 L90.55,178.04" fill="none" stroke="#c8c8c8" stroke-width="0.95" stroke-linecap="square" stroke-linejoin="miter"/>
<path d="M98.13,173.42 L96.37,177.20M97.25,175.52 L97.25,181.23M99.01,174.68 L103.85,174.68M101.48,173.42 L101.48,174.68M100.33,175.52 L102.97,175.52 L102.97,179.72 L100.33,179.72 L100.33,175.52M100.33,176.95 L102.97,176.95M100.33,178.29 L102.97,178.29M99.01,175.52 L99.01,180.98 L104.12,180.98" fill="none" stroke="#c8c8c8" stroke-width="0.95" stroke-linecap="square" stroke-linejoin="miter"/>
<text stroke="#c8c8c8" stroke-width="0.3" transform="scale(0.76,1)" x="141.08 147.52 153.42 160.38 166.82 173.25" y="181.20" text-anchor="middle" font-family="Liberation Sans" font-size="11.20" font-weight="normal" fill="#c8c8c8">:6,083</text>
<path d="M143.89,173.00 L143.89,174.09M139.93,174.09 L147.85,174.09M142.13,175.18 L145.65,175.18 L145.65,176.61 L142.13,176.61 L142.13,175.18M140.64,181.23 L140.64,177.70 L147.15,177.70 L147.15,181.23M142.57,178.71 L145.21,178.71 L145.21,180.14 L142.57,180.14 L142.57,178.71" fill="none" stroke="#c8c8c8" stroke-width="0.95" stroke-linecap="square" stroke-linejoin="miter"/>
<path d="M151.91,173.42 L150.15,177.20M151.03,175.52 L151.03,181.23M152.79,174.68 L157.63,174.68M155.25,173.42 L155.25,174.68M154.11,175.52 L156.75,175.52 L156.75,179.72 L154.11,179.72 L154.11,175.52M154.11,176.95 L156.75,176.95M154.11,178.29 L156.75,178.29M152.79,175.52 L152.79,180.98 L157.89,180.98" fill="none" stroke="#c8c8c8" stroke-width="0.95" stroke-linecap="square" stroke-linejoin="miter"/>
<text stroke="#c8c8c8" stroke-width="0.3" transform="scale(0.76,1)" x="211.85 218.28 224.19 231.15 237.58 244.01" y="181.20" text-anchor="middle" font-family="Liberation Sans" font-size="11.20" font-weight="normal" fill="#c8c8c8">:6,130</text>
<path d="M197.67,173.00 L197.67,174.09M194.15,175.52 L194.15,174.26 L201.19,174.26 L201.19,175.52M193.71,177.62 L201.63,177.62M197.23,175.52 L195.47,179.30 L200.31,181.23M199.43,176.36 L197.67,179.72 L194.59,181.23" fill="none" stroke="#c8c8c8" stroke-width="0.95" stroke-linecap="square" stroke-linejoin="miter"/>
<path d="M205.69,173.42 L203.93,177.20M204.81,175.52 L204.81,181.23M206.57,174.68 L211.41,174.68M209.03,173.42 L209.03,174.68M207.89,175.52 L210.53,175.52 L210.53,179.72 L207.89,179.72 L207.89,175.52M207.89,176.95 L210.53,176.95M207.89,178.29 L210.53,178.29M206.57,175.52 L206.57,180.98 L211.67,180.98" fill="none" stroke="#c8c8c8" stroke-width="0.95" stroke-linecap="square" stroke-linejoin="miter"/>
<text stroke="#c8c8c8" stroke-width="0.3" transform="scale(0.76,1)" x="282.61 289.04 294.95 301.91 308.34 314.77" y="181.20" text-anchor="middle" font-family="Liberation Sans" font-size="11.20" font-weight="normal" fill="#c8c8c8">:5,778</text>
<path d="M249.25,173.42 L247.93,176.36 L250.13,176.36M249.69,174.93 L247.93,178.46 L250.57,178.04M249.25,178.04 L249.25,180.98M247.93,179.55 L247.75,180.56M250.22,179.55 L250.57,180.56M252.77,173.42 L251.45,175.94M252.33,174.68 L254.97,174.68 L251.89,178.04M252.77,175.94 L255.67,178.04M253.03,178.71 L253.74,179.38M252.51,180.06 L254.09,181.23" fill="none" stroke="#c8c8c8" stroke-width="0.95" stroke-linecap="square" stroke-linejoin="miter"/>
<path d="M259.47,173.42 L257.71,177.20M258.59,175.52 L258.59,181.23M260.35,174.68 L265.19,174.68M262.81,173.42 L262.81,174.68M261.67,175.52 L264.31,175.52 L264.31,179.72 L261.67,179.72 L261.67,175.52M261.67,176.95 L264.31,176.95M261.67,178.29 L264.31,178.29M260.35,175.52 L260.35,180.98 L265.45,180.98" fill="none" stroke="#c8c8c8" stroke-width="0.95" stroke-linecap="square" stroke-linejoin="miter"/>
<text stroke="#c8c8c8" stroke-width="0.3" transform="scale(0.76,1)" x="353.37 359.80 365.71 372.67 379.10 385.53" y="181.20" text-anchor="middle" font-family="Liberation Sans" font-size="11.20" font-weight="normal" fill="#c8c8c8">:5,845</text>
<rect x="6" y="388" width="407" height="10.5" fill="#000"/>
<text stroke="#c8c8c8" stroke-width="0.3" transform="scale(0.76,1)" x="12.43" y="397.60" text-anchor="middle" font-family="Liberation Sans" font-size="11.20" font-weight="normal" fill="#c8c8c8">[</text>
<path d="M16.78,389.85 L12.82,393.13M16.78,389.85 L20.74,393.13M15.02,393.38 L18.54,393.38M13.96,395.06 L19.59,395.06M16.78,393.38 L16.78,397.58M14.84,395.90 L15.46,396.99M18.71,395.90 L18.10,396.99M13.08,397.66 L20.47,397.66" fill="none" stroke="#c8c8c8" stroke-width="0.95" stroke-linecap="square" stroke-linejoin="miter"/>
<path d="M29.68,390.02 L28.63,392.37M29.24,391.70 L34.53,391.70M31.45,389.85 L31.45,393.80M27.48,393.80 L35.41,393.80M30.39,393.80 L30.12,396.15 L27.92,397.75M32.50,393.80 L32.50,397.33 L35.41,397.33 L35.41,396.32" fill="none" stroke="#c8c8c8" stroke-width="0.95" stroke-linecap="square" stroke-linejoin="miter"/>
<path d="M37.70,397.83 L37.70,390.27 L39.64,390.27 L38.76,392.96 L39.81,394.64 L38.76,395.65M41.05,390.44 L44.57,390.44 L44.57,393.80 L41.05,393.80M41.05,392.12 L44.57,392.12M41.05,390.44 L41.05,397.58 L42.37,396.82M42.10,393.80 L45.18,397.66M44.57,394.64 L42.81,395.73" fill="none" stroke="#c8c8c8" stroke-width="0.95" stroke-linecap="square" stroke-linejoin="miter"/>
<path d="M47.48,390.27 L48.54,391.28M46.86,392.96 L48.36,392.96 L48.36,396.32 L47.04,397.58M48.36,396.82 L49.68,397.50 L55.23,397.50M49.68,390.86 L54.96,390.86M50.30,392.12 L54.35,392.12 L54.35,394.64 L50.30,394.64 L50.30,392.12M50.30,393.38 L54.35,393.38M49.68,395.73 L54.96,395.73M52.32,389.85 L52.32,396.74" fill="none" stroke="#c8c8c8" stroke-width="0.95" stroke-linecap="square" stroke-linejoin="miter"/>
<path d="M58.58,390.02 L57.26,392.96 L59.46,392.96M59.02,391.53 L57.26,395.06 L59.90,394.64M58.58,394.64 L58.58,397.58M57.26,396.15 L57.08,397.16M59.55,396.15 L59.90,397.16M60.78,390.86 L64.30,390.86M62.54,389.85 L62.54,392.12M61.22,392.12 L63.86,392.12M60.43,394.22 L60.43,393.30 L64.83,393.30 L64.83,394.22M61.84,394.64 L60.78,397.83M63.42,394.64 L63.42,397.33 L65.00,397.33" fill="none" stroke="#c8c8c8" stroke-width="0.95" stroke-linecap="square" stroke-linejoin="miter"/>
<text stroke="#c8c8c8" stroke-width="0.3" transform="scale(0.76,1)" x="96.05 102.49 108.39 115.35 121.79 128.22" y="397.60" text-anchor="middle" font-family="Liberation Sans" font-size="11.20" font-weight="normal" fill="#c8c8c8">15,899</text>
<path d="M101.85,392.12 L107.71,397.16 M107.71,392.12 L101.85,397.16" stroke="#c8c8c8" stroke-width="0.95" fill="none"/>
<text stroke="#c8c8c8" stroke-width="0.3" transform="scale(0.76,1)" x="147.52 153.42 160.38 166.82 173.25 179.68 186.12" y="397.60" text-anchor="middle" font-family="Liberation Sans" font-size="11.20" font-weight="normal" fill="#c8c8c8">1.00]-[</text>
<path d="M149.22,389.77 L148.34,391.28M146.14,391.28 L151.42,391.28 L151.42,397.66 L146.14,397.66 L146.14,391.28M146.14,394.39 L151.42,394.39" fill="none" stroke="#c8c8c8" stroke-width="0.95" stroke-linecap="square" stroke-linejoin="miter"/>
<path d="M158.56,389.85 L154.60,393.13M158.56,389.85 L162.52,393.13M156.80,393.38 L160.32,393.38M155.74,395.06 L161.38,395.06M158.56,393.38 L158.56,397.58M156.62,395.90 L157.24,396.99M160.50,395.90 L159.88,396.99M154.86,397.66 L162.26,397.66" fill="none" stroke="#c8c8c8" stroke-width="0.95" stroke-linecap="square" stroke-linejoin="miter"/>
<path d="M171.47,390.02 L170.41,392.37M171.03,391.70 L176.31,391.70M173.23,389.85 L173.23,393.80M169.27,393.80 L177.19,393.80M172.17,393.80 L171.91,396.15 L169.71,397.75M174.28,393.80 L174.28,397.33 L177.19,397.33 L177.19,396.32" fill="none" stroke="#c8c8c8" stroke-width="0.95" stroke-linecap="square" stroke-linejoin="miter"/>
<path d="M179.48,397.83 L179.48,390.27 L181.42,390.27 L180.54,392.96 L181.60,394.64 L180.54,395.65M182.83,390.44 L186.35,390.44 L186.35,393.80 L182.83,393.80M182.83,392.12 L186.35,392.12M182.83,390.44 L182.83,397.58 L184.15,396.82M183.88,393.80 L186.96,397.66M186.35,394.64 L184.59,395.73" fill="none" stroke="#c8c8c8" stroke-width="0.95" stroke-linecap="square" stroke-linejoin="miter"/>
<path d="M189.26,390.27 L190.32,391.28M188.65,392.96 L190.14,392.96 L190.14,396.32 L188.82,397.58M190.14,396.82 L191.46,397.50 L197.01,397.50M191.46,390.86 L196.74,390.86M192.08,392.12 L196.13,392.12 L196.13,394.64 L192.08,394.64 L192.08,392.12M192.08,393.38 L196.13,393.38M191.46,395.73 L196.74,395.73M194.10,389.85 L194.10,396.74" fill="none" stroke="#c8c8c8" stroke-width="0.95" stroke-linecap="square" stroke-linejoin="miter"/>
<path d="M200.36,390.02 L199.04,392.96 L201.24,392.96M200.80,391.53 L199.04,395.06 L201.68,394.64M200.36,394.64 L200.36,397.58M199.04,396.15 L198.86,397.16M201.33,396.15 L201.68,397.16M202.56,390.86 L206.08,390.86M204.32,389.85 L204.32,392.12M203.00,392.12 L205.64,392.12M202.21,394.22 L202.21,393.30 L206.61,393.30 L206.61,394.22M203.62,394.64 L202.56,397.83M205.20,394.64 L205.20,397.33 L206.78,397.33" fill="none" stroke="#c8c8c8" stroke-width="0.95" stroke-linecap="square" stroke-linejoin="miter"/>
<text stroke="#c8c8c8" stroke-width="0.3" transform="scale(0.76,1)" x="289.04 294.95 301.91 308.34 314.77" y="397.60" text-anchor="middle" font-family="Liberation Sans" font-size="11.20" font-weight="normal" fill="#c8c8c8">5,845</text>
<path d="M243.63,392.12 L249.49,397.16 M249.49,392.12 L243.63,397.16" stroke="#c8c8c8" stroke-width="0.95" fill="none"/>
<text stroke="#c8c8c8" stroke-width="0.3" transform="scale(0.76,1)" x="334.07 339.98 346.94 353.37 359.80" y="397.60" text-anchor="middle" font-family="Liberation Sans" font-size="11.20" font-weight="normal" fill="#c8c8c8">1.00]</text>
<path d="M283.47,390.02 L282.15,392.96 L284.35,392.96M283.91,391.53 L282.15,395.06 L284.79,394.64M283.47,394.64 L283.47,397.58M282.15,396.15 L281.98,397.16M284.44,396.15 L284.79,397.16M286.99,390.02 L285.67,392.54M286.55,391.28 L289.19,391.28 L286.11,394.64M286.99,392.54 L289.90,394.64M287.26,395.31 L287.96,395.98M286.73,396.66 L288.31,397.83" fill="none" stroke="#c8c8c8" stroke-width="0.95" stroke-linecap="square" stroke-linejoin="miter"/>
<path d="M293.69,390.02 L291.93,393.80M292.81,392.12 L292.81,397.83M294.57,391.28 L299.41,391.28M297.04,390.02 L297.04,391.28M295.89,392.12 L298.53,392.12 L298.53,396.32 L295.89,396.32 L295.89,392.12M295.89,393.55 L298.53,393.55M295.89,394.89 L298.53,394.89M294.57,392.12 L294.57,397.58 L299.68,397.58" fill="none" stroke="#c8c8c8" stroke-width="0.95" stroke-linecap="square" stroke-linejoin="miter"/>
<path d="M307.48,390.44 L312.76,390.44 L312.76,397.58 L307.48,397.58 L307.48,390.44M307.48,393.97 L312.76,393.97" fill="none" stroke="#c8c8c8" stroke-width="0.95" stroke-linecap="square" stroke-linejoin="miter"/>
<path d="M318.14,390.02 L316.38,393.80M317.26,392.12 L317.26,397.83M319.02,392.12 L323.86,392.12M322.10,390.02 L322.10,397.58 L320.78,397.16M319.72,393.80 L320.60,395.06" fill="none" stroke="#c8c8c8" stroke-width="0.95" stroke-linecap="square" stroke-linejoin="miter"/>
<text stroke="#c8c8c8" stroke-width="0.3" transform="scale(0.76,1)" x="430.57 437.00 443.43 449.86 456.30 462.73 469.16 475.60 482.03 488.46 494.89 507.76 514.19 520.10 527.06 533.49 539.92" y="397.60" text-anchor="middle" font-family="Liberation Sans" font-size="11.20" font-weight="normal" fill="#c8c8c8">:2025/07/3110,054</text>
<polyline points="6.1,510.3 15.0,510.3 27.3,512.4 41.0,515.1 61.5,518.1 75.1,519.5 100.0,522.2 118.0,523.0 133.3,520.7 152.4,515.9 171.6,509.2 190.7,500.6 203.7,491.7 213.3,488.7 222.9,486.3 232.5,485.6 242.2,485.4 251.8,485.3 261.4,487.4 271.0,485.0 280.6,482.7 290.2,480.2 299.8,478.7 309.4,477.2 319.1,476.5 328.7,475.7 338.3,474.4 347.9,471.9 357.5,465.6 367.1,458.4 376.7,448.2 386.4,445.2 396.0,448.8 405.6,448.6 415.2,448.6 424.8,451.4 434.4,452.1 444.0,452.9 453.6,454.0 463.3,452.6 472.9,453.2 482.5,453.7 492.1,454.7 501.7,455.9 511.3,455.9 520.9,455.8 530.5,455.8 540.2,454.3 549.8,454.2 559.4,457.9 569.0,461.6 578.6,464.7 588.2,466.9 597.8,466.7 607.5,466.8 617.1,467.3 626.7,468.5 636.3,473.0 645.9,475.8 655.5,477.0 665.1,480.7 674.7,484.8 684.4,492.7 694.0,501.9 703.6,508.6 713.2,511.2 722.8,513.3 732.4,515.3 742.0,516.3 751.6,517.5 761.3,518.9 770.9,520.0 780.5,520.7 790.1,520.8 799.7,519.9 809.3,517.0 818.9,514.6 828.6,513.2 838.2,513.1 847.8,512.9 857.4,511.4 867.0,511.3 876.6,511.4 886.2,509.9 895.8,506.2 905.5,502.9 915.1,502.2 921.2,501.7 938.7,496.6 962.7,489.3" fill="none" stroke="#c4bc00" stroke-width="1.3" stroke-linejoin="round"/>
<polyline points="6.1,487.8 13.7,487.8 23.2,485.7 41.0,476.9 54.6,471.4 78.7,463.5 95.6,457.7 142.8,437.4 171.6,439.4 190.7,436.9 203.7,437.0 213.3,435.4 222.9,432.6 232.5,427.8 242.2,423.7 251.8,419.0 261.4,409.9 271.0,408.3 280.6,406.5 290.2,404.4 299.8,402.8 309.4,401.7 319.1,401.1 328.7,400.2 338.3,396.8 347.9,395.0 357.5,395.5 367.1,398.0 376.7,403.0 386.4,404.2 396.0,402.0 405.6,402.1 415.2,402.1 424.8,401.0 434.4,401.2 444.0,401.4 453.6,402.1 463.3,407.0 472.9,407.3 482.5,407.8 492.1,408.8 501.7,409.4 511.3,409.6 520.9,409.4 530.5,409.4 540.2,413.2 549.8,416.2 559.4,417.5 569.0,417.8 578.6,419.3 588.2,420.2 597.8,420.2 607.5,420.3 617.1,420.5 626.7,420.3 636.3,419.6 645.9,419.9 655.5,420.8 665.1,421.0 674.7,421.2 684.4,419.4 694.0,416.8 703.6,416.1 713.2,419.5 722.8,423.7 732.4,428.8 742.0,434.3 751.6,438.1 761.3,439.4 770.9,440.9 780.5,442.3 790.1,444.4 799.7,447.6 809.3,453.8 818.9,458.5 828.6,461.3 838.2,462.0 847.8,462.5 857.4,465.2 867.0,465.5 876.6,465.1 886.2,464.8 895.8,465.8 905.5,466.6 915.1,465.3 921.2,464.3 947.4,464.6 962.7,466.0" fill="none" stroke="#c4bc00" stroke-width="1.3" stroke-linejoin="round"/>
<polyline points="6.1,504.9 16.4,504.9 19.1,505.8 35.5,505.8 38.3,506.6 54.6,506.6 60.1,507.6 64.2,506.6 95.0,506.3 114.1,504.4 133.3,500.6 152.4,496.8 175.4,489.1 194.5,481.5 203.7,478.3 213.3,475.7 222.9,473.1 232.5,471.5 242.2,470.3 251.8,469.1 261.4,468.4 271.0,466.2 280.6,464.0 290.2,461.6 299.8,460.2 309.4,458.7 319.1,458.1 328.7,457.2 338.3,455.4 347.9,453.1 357.5,448.5 367.1,443.6 376.7,437.1 386.4,435.2 396.0,437.3 405.6,437.2 415.2,437.3 424.8,439.1 434.4,439.7 444.0,440.3 453.6,441.3 463.3,441.4 472.9,441.9 482.5,442.5 492.1,443.5 501.7,444.5 511.3,444.6 520.9,444.4 530.5,444.4 540.2,444.2 549.8,444.9 559.4,448.0 569.0,450.9 578.6,453.6 588.2,455.5 597.8,455.3 607.5,455.4 617.1,455.9 626.7,456.7 636.3,459.9 645.9,462.1 655.5,463.2 665.1,466.1 674.7,469.2 684.4,474.8 694.0,481.1 703.6,486.0 713.2,488.7 722.8,491.3 732.4,494.1 742.0,496.2 751.6,498.1 761.3,499.4 770.9,500.6 780.5,501.5 790.1,502.1 799.7,502.2 809.3,501.5 818.9,500.9 828.6,500.5 838.2,500.6 847.8,500.5 857.4,500.1 867.0,500.1 876.6,500.0 886.2,498.9 895.8,496.3 905.5,494.0 915.1,493.2 922.6,492.2 947.4,486.4 962.7,483.8" fill="none" stroke="#00b400" stroke-width="1.25" stroke-linejoin="round" stroke-dasharray="2.6 1.4"/>
<polyline points="6.1,493.9 15.0,493.9 27.3,491.2 41.0,487.1 68.3,481.0 88.8,475.5 95.0,471.9 114.1,466.1 133.3,459.4 152.4,457.2 175.4,454.7 190.7,450.8 203.7,450.4 213.3,448.5 222.9,445.7 232.5,442.0 242.2,438.8 251.8,435.2 261.4,428.9 271.0,427.1 280.6,425.2 290.2,423.0 299.8,421.4 309.4,420.2 319.1,419.6 328.7,418.7 338.3,415.8 347.9,413.9 357.5,412.7 367.1,412.8 376.7,414.0 386.4,414.2 396.0,413.5 405.6,413.5 415.2,413.5 424.8,413.3 434.4,413.7 444.0,414.0 453.6,414.8 463.3,418.2 472.9,418.5 482.5,419.0 492.1,420.1 501.7,420.8 511.3,421.0 520.9,420.8 530.5,420.8 540.2,423.3 549.8,425.5 559.4,427.4 569.0,428.6 578.6,430.4 588.2,431.6 597.8,431.6 607.5,431.7 617.1,432.0 626.7,432.1 636.3,432.7 645.9,433.6 655.5,434.6 665.1,435.6 674.7,436.7 684.4,437.3 694.0,437.6 703.6,438.8 713.2,441.9 722.8,445.6 732.4,450.0 742.0,454.4 751.6,457.6 761.3,458.9 770.9,460.3 780.5,461.5 790.1,463.1 799.7,465.3 809.3,469.2 818.9,472.2 828.6,474.0 838.2,474.5 847.8,474.8 857.4,476.5 867.0,476.7 876.6,476.5 886.2,475.9 895.8,475.7 905.5,475.5 915.1,474.3 929.9,472.6 950.3,471.6 962.7,471.6" fill="none" stroke="#00b400" stroke-width="1.25" stroke-linejoin="round" stroke-dasharray="2.6 1.4"/>
<polyline points="6.1,499.4 24.6,499.4 41.0,496.7 68.3,492.6 95.0,490.1 114.1,485.3 133.3,480.5 152.4,476.7 175.4,472.8 194.5,466.1 203.7,464.3 213.3,462.1 222.9,459.4 232.5,456.7 242.2,454.5 251.8,452.1 261.4,448.7 271.0,446.6 280.6,444.6 290.2,442.3 299.8,440.8 309.4,439.5 319.1,438.8 328.7,437.9 338.3,435.6 347.9,433.5 357.5,430.6 367.1,428.2 376.7,425.6 386.4,424.7 396.0,425.4 405.6,425.4 415.2,425.4 424.8,426.2 434.4,426.7 444.0,427.2 453.6,428.0 463.3,429.8 472.9,430.2 482.5,430.8 492.1,431.8 501.7,432.6 511.3,432.8 520.9,432.6 530.5,432.6 540.2,433.7 549.8,435.2 559.4,437.7 569.0,439.7 578.6,442.0 588.2,443.5 597.8,443.5 607.5,443.5 617.1,443.9 626.7,444.4 636.3,446.3 645.9,447.9 655.5,448.9 665.1,450.9 674.7,453.0 684.4,456.0 694.0,459.3 703.6,462.4 713.2,465.3 722.8,468.5 732.4,472.1 742.0,475.3 751.6,477.8 761.3,479.1 770.9,480.5 780.5,481.5 790.1,482.6 799.7,483.8 809.3,485.4 818.9,486.6 828.6,487.3 838.2,487.5 847.8,487.7 857.4,488.3 867.0,488.4 876.6,488.3 886.2,487.4 895.8,486.0 905.5,484.8 915.1,483.7 935.8,480.6 962.7,477.4" fill="none" stroke="#b80000" stroke-width="1.3" stroke-linejoin="round"/>
<polyline points="6.0,489.2 11.4,489.2 21.1,487.8 30.7,481.2 40.3,471.5 49.9,470.6 59.5,471.7 69.1,470.7 78.7,468.6 88.4,468.3 98.0,457.1 107.6,455.5 117.2,446.6 126.8,447.2 136.4,456.5 146.0,459.1 155.6,473.5 165.3,471.5 174.9,474.4 184.5,447.7 194.1,439.7 203.7,442.9 213.3,441.4 222.9,432.4 232.5,424.1 242.2,425.8 251.8,420.2 261.4,398.9 271.0,428.1 280.6,425.4 290.2,420.4 299.8,425.1 309.4,428.0 319.1,433.2 328.7,428.2 338.3,408.0 347.9,413.7 357.5,412.6 367.1,422.3 376.7,419.3 386.4,428.8 396.0,455.0 405.6,441.9 415.2,441.6 424.8,449.6 434.4,434.4 444.0,435.8 453.6,438.7 463.3,435.9 472.9,437.1 482.5,436.5 492.1,441.5 501.7,443.4 511.3,431.1 520.9,429.7 530.5,427.8 540.2,432.1 549.8,444.5 559.4,465.0 569.0,464.5 578.6,466.6 588.2,461.7 597.8,453.8 607.5,442.7 617.1,450.3 626.7,458.6 636.3,474.3 645.9,469.4 655.5,460.1 665.1,477.3 674.7,481.8 684.4,500.8 694.0,510.8 703.6,506.6 713.2,493.3 722.8,496.0 732.4,503.2 742.0,499.5 751.6,498.1 761.3,492.3 770.9,492.4 780.5,488.4 790.1,484.9 799.7,478.6 809.3,476.1 818.9,475.1 828.6,474.0 838.2,479.7 847.8,472.3 857.4,473.0 867.0,479.7 876.6,478.4 886.2,482.8 895.8,481.6 905.5,480.5 915.1,472.0" fill="none" stroke="#ff1010" stroke-width="2.2" stroke-linejoin="round"/>
<text transform="scale(0.74,1)" x="156.01 162.61" y="162.50" text-anchor="middle" font-family="Liberation Sans" font-size="11.00" font-weight="normal" fill="#b4b4b4">04</text>
<text transform="scale(0.74,1)" x="156.01 162.61" y="378.80" text-anchor="middle" font-family="Liberation Sans" font-size="11.00" font-weight="normal" fill="#b4b4b4">04</text>
<text transform="scale(0.74,1)" x="156.01 162.61" y="539.00" text-anchor="middle" font-family="Liberation Sans" font-size="11.00" font-weight="normal" fill="#b4b4b4">04</text>
<text transform="scale(0.74,1)" x="428.98 435.59" y="162.50" text-anchor="middle" font-family="Liberation Sans" font-size="11.00" font-weight="normal" fill="#b4b4b4">05</text>
<text transform="scale(0.74,1)" x="428.98 435.59" y="378.80" text-anchor="middle" font-family="Liberation Sans" font-size="11.00" font-weight="normal" fill="#b4b4b4">05</text>
<text transform="scale(0.74,1)" x="428.98 435.59" y="539.00" text-anchor="middle" font-family="Liberation Sans" font-size="11.00" font-weight="normal" fill="#b4b4b4">05</text>
<text transform="scale(0.74,1)" x="688.44 695.05" y="162.50" text-anchor="middle" font-family="Liberation Sans" font-size="11.00" font-weight="normal" fill="#b4b4b4">06</text>
<text transform="scale(0.74,1)" x="688.44 695.05" y="378.80" text-anchor="middle" font-family="Liberation Sans" font-size="11.00" font-weight="normal" fill="#b4b4b4">06</text>
<text transform="scale(0.74,1)" x="688.44 695.05" y="539.00" text-anchor="middle" font-family="Liberation Sans" font-size="11.00" font-weight="normal" fill="#b4b4b4">06</text>
<text transform="scale(0.74,1)" x="961.41 968.02" y="162.50" text-anchor="middle" font-family="Liberation Sans" font-size="11.00" font-weight="normal" fill="#b4b4b4">07</text>
<text transform="scale(0.74,1)" x="961.41 968.02" y="378.80" text-anchor="middle" font-family="Liberation Sans" font-size="11.00" font-weight="normal" fill="#b4b4b4">07</text>
<text transform="scale(0.74,1)" x="961.41 968.02" y="539.00" text-anchor="middle" font-family="Liberation Sans" font-size="11.00" font-weight="normal" fill="#b4b4b4">07</text>
<text transform="scale(0.74,1)" x="1312.76 1319.37 1325.44 1332.58 1339.19 1345.80" y="56.10" text-anchor="middle" font-family="Liberation Sans" font-size="11.00" font-weight="normal" fill="#b4b4b4">16,000</text>
<text transform="scale(0.74,1)" x="1312.76 1319.37 1325.44 1332.58 1339.19 1345.80" y="101.20" text-anchor="middle" font-family="Liberation Sans" font-size="11.00" font-weight="normal" fill="#b4b4b4">15,000</text>
<text transform="scale(0.74,1)" x="1312.76 1319.37 1325.44 1332.58 1339.19 1345.80" y="146.30" text-anchor="middle" font-family="Liberation Sans" font-size="11.00" font-weight="normal" fill="#b4b4b4">14,000</text>
<text transform="scale(0.74,1)" x="1312.76 1318.83 1325.98 1332.58 1339.19" y="204.00" text-anchor="middle" font-family="Liberation Sans" font-size="11.00" font-weight="normal" fill="#b4b4b4">6,000</text>
<text transform="scale(0.74,1)" x="1312.76 1318.83 1325.98 1332.58 1339.19" y="244.30" text-anchor="middle" font-family="Liberation Sans" font-size="11.00" font-weight="normal" fill="#b4b4b4">5,500</text>
<text transform="scale(0.74,1)" x="1312.76 1318.83 1325.98 1332.58 1339.19" y="284.70" text-anchor="middle" font-family="Liberation Sans" font-size="11.00" font-weight="normal" fill="#b4b4b4">5,000</text>
<text transform="scale(0.74,1)" x="1312.76 1318.83 1325.98 1332.58 1339.19" y="324.30" text-anchor="middle" font-family="Liberation Sans" font-size="11.00" font-weight="normal" fill="#b4b4b4">4,500</text>
<text transform="scale(0.74,1)" x="1312.76 1318.83 1325.98 1332.58 1339.19" y="364.70" text-anchor="middle" font-family="Liberation Sans" font-size="11.00" font-weight="normal" fill="#b4b4b4">4,000</text>
<text transform="scale(0.74,1)" x="1312.76 1319.37 1325.44 1332.58 1339.19 1345.80" y="394.80" text-anchor="middle" font-family="Liberation Sans" font-size="11.00" font-weight="normal" fill="#b4b4b4">11,500</text>
<text transform="scale(0.74,1)" x="1312.76 1319.37 1325.44 1332.58 1339.19 1345.80" y="421.00" text-anchor="middle" font-family="Liberation Sans" font-size="11.00" font-weight="normal" fill="#b4b4b4">11,000</text>
<text transform="scale(0.74,1)" x="1312.76 1319.37 1325.44 1332.58 1339.19 1345.80" y="447.10" text-anchor="middle" font-family="Liberation Sans" font-size="11.00" font-weight="normal" fill="#b4b4b4">10,500</text>
<text transform="scale(0.74,1)" x="1312.76 1318.83 1325.98 1332.58 1339.19" y="499.70" text-anchor="middle" font-family="Liberation Sans" font-size="11.00" font-weight="normal" fill="#b4b4b4">9,500</text>
<text transform="scale(0.74,1)" x="1312.76 1318.83 1325.98 1332.58 1339.19" y="525.90" text-anchor="middle" font-family="Liberation Sans" font-size="11.00" font-weight="normal" fill="#b4b4b4">9,000</text>
<rect x="968" y="54" width="47" height="17.5" fill="#dcdcdc"/><text stroke="#111" stroke-width="0.35" transform="scale(0.84,1)" x="1165.81 1171.63 1178.16 1183.27 1189.09 1194.91" y="65.65" text-anchor="middle" font-family="Liberation Sans" font-size="10.00" font-weight="bold" fill="#111">15,899</text>
<rect x="968" y="209.5" width="47" height="17.5" fill="#dcdcdc"/><text stroke="#111" stroke-width="0.35" transform="scale(0.84,1)" x="1168.72 1175.25 1180.36 1186.18 1192.00" y="221.15" text-anchor="middle" font-family="Liberation Sans" font-size="10.00" font-weight="bold" fill="#111">5,845</text>
<rect x="968" y="464.5" width="47" height="17.0" fill="#dcdcdc"/><text stroke="#111" stroke-width="0.35" transform="scale(0.84,1)" x="1165.81 1171.63 1178.16 1183.27 1189.09 1194.91" y="475.90" text-anchor="middle" font-family="Liberation Sans" font-size="10.00" font-weight="bold" fill="#111">10,054</text>
<rect x="7" y="399.5" width="135" height="57" fill="#fff"/>
<path d="M12.31,401.55 L12.31,407.92 L11.38,407.36M9.05,403.30 L15.41,403.30M10.60,404.70 L9.05,406.80M14.02,404.70 L15.57,406.80M14.48,401.34 L14.95,402.18M15.57,401.20 L16.03,402.04" fill="none" stroke="#000" stroke-width="0.95" stroke-linecap="square" stroke-linejoin="miter"/>
<path d="M18.99,402.25 L18.99,405.54M22.64,401.90 L22.64,405.40 L20.15,407.92" fill="none" stroke="#000" stroke-width="0.95" stroke-linecap="square" stroke-linejoin="miter"/>
<path d="M26.83,402.60 L28.77,403.72M26.60,407.64 L29.55,406.52 L32.65,403.30" fill="none" stroke="#000" stroke-width="0.95" stroke-linecap="square" stroke-linejoin="miter"/>
<path d="M35.22,402.18 L37.08,403.02M34.91,404.00 L36.77,404.84M35.22,407.92 L38.17,406.80 L41.27,403.86M40.19,401.34 L40.65,402.18M41.27,401.20 L41.74,402.04" fill="none" stroke="#000" stroke-width="0.95" stroke-linecap="square" stroke-linejoin="miter"/>
<path d="M44.46,404.56 L49.89,404.00 L49.27,405.40M46.01,403.30 L46.95,407.92" fill="none" stroke="#000" stroke-width="0.95" stroke-linecap="square" stroke-linejoin="miter"/>
<path d="M52.15,404.70 L58.67,404.70" fill="none" stroke="#000" stroke-width="0.95" stroke-linecap="square" stroke-linejoin="miter"/>
<path d="M62.63,403.30 L60.93,407.64M64.81,403.30 L67.29,407.64M66.05,401.34 L66.51,402.18M67.13,401.20 L67.60,402.04" fill="none" stroke="#000" stroke-width="0.95" stroke-linecap="square" stroke-linejoin="miter"/>
<path d="M69.93,402.60 L71.87,403.72M69.70,407.64 L72.65,406.52 L75.75,403.30" fill="none" stroke="#000" stroke-width="0.95" stroke-linecap="square" stroke-linejoin="miter"/>
<path d="M80.11,401.55 L80.11,408.06M80.11,403.86 L82.98,405.12M83.13,401.48 L83.60,402.32M84.22,401.34 L84.68,402.18" fill="none" stroke="#000" stroke-width="0.95" stroke-linecap="square" stroke-linejoin="miter"/>
<text transform="scale(0.8,1)" x="109.73" y="408.10" text-anchor="middle" font-family="Liberation Sans" font-size="9.80" font-weight="normal" fill="#000">(</text>
<path d="M94.30,401.41 L90.81,404.14M94.30,401.41 L97.79,404.14M92.75,404.35 L95.85,404.35M91.82,405.75 L96.78,405.75M94.30,404.35 L94.30,407.85M92.59,406.45 L93.14,407.36M96.01,406.45 L95.46,407.36M91.04,407.92 L97.56,407.92" fill="none" stroke="#000" stroke-width="0.95" stroke-linecap="square" stroke-linejoin="miter"/>
<path d="M107.72,401.34 L106.94,402.60M105.00,402.60 L109.66,402.60 L109.66,407.92 L105.00,407.92 L105.00,402.60M105.00,405.19 L109.66,405.19" fill="none" stroke="#000" stroke-width="0.95" stroke-linecap="square" stroke-linejoin="miter"/>
<path d="M115.95,401.41 L112.46,404.14M115.95,401.41 L119.44,404.14M114.40,404.35 L117.50,404.35M113.47,405.75 L118.43,405.75M115.95,404.35 L115.95,407.85M114.24,406.45 L114.79,407.36M117.66,406.45 L117.11,407.36M112.69,407.92 L119.21,407.92" fill="none" stroke="#000" stroke-width="0.95" stroke-linecap="square" stroke-linejoin="miter"/>
<text transform="scale(0.8,1)" x="153.08" y="408.10" text-anchor="middle" font-family="Liberation Sans" font-size="9.80" font-weight="normal" fill="#000">)</text>
<path d="M125.88,407.50 L128.98,401.90 L132.08,407.50 L125.88,407.50" fill="none" stroke="#000" stroke-width="0.95" stroke-linecap="square" stroke-linejoin="miter"/>
<path d="M135.01,403.30 L140.19,407.50 M140.19,403.30 L135.01,407.50" stroke="#000" stroke-width="0.95" fill="none"/>
<line x1="7" y1="413.4" x2="15" y2="413.4" stroke="#e00000" stroke-width="1.3"/>
<path d="M16.85,411.32 L22.75,411.32M18.32,410.30 L18.32,414.18M21.28,410.30 L21.28,414.18M18.32,412.34 L21.28,412.34M18.32,413.30 L21.28,413.30M16.48,414.18 L23.12,414.18M18.32,414.18 L16.85,415.27M21.28,414.18 L22.75,415.27M19.80,414.52 L19.80,416.56M18.32,415.54 L21.28,415.54M17.07,416.63 L22.53,416.63" fill="none" stroke="#000" stroke-width="0.95" stroke-linecap="square" stroke-linejoin="miter"/>
<path d="M24.90,410.64 L25.79,411.32M24.61,412.41 L25.49,413.09M24.68,414.72 L25.93,413.36M27.26,410.30 L26.52,412.14M27.11,411.46 L27.11,414.18M27.11,411.46 L31.32,411.46M27.11,412.48 L30.58,412.48M27.11,413.50 L30.58,413.50M29.18,410.30 L29.18,414.18M24.68,415.27 L31.32,415.27M28.00,414.18 L28.00,416.76" fill="none" stroke="#000" stroke-width="0.95" stroke-linecap="square" stroke-linejoin="miter"/>
<path d="M34.35,410.44 L33.25,412.82 L35.09,412.82M34.72,411.66 L33.25,414.52 L35.46,414.18M34.35,414.18 L34.35,416.56M33.25,415.40 L33.10,416.22M35.17,415.40 L35.46,416.22M37.68,410.24 L37.31,410.78M36.20,411.05 L39.15,411.05 L39.15,413.23 L36.20,413.23 L36.20,411.05M36.20,412.14 L39.15,412.14M37.68,413.23 L37.68,416.76 L36.94,416.36M36.05,414.52 L37.16,415.27M39.52,413.91 L38.27,414.86M37.82,414.72 L39.74,416.63M35.90,416.49 L37.53,415.27" fill="none" stroke="#000" stroke-width="0.95" stroke-linecap="square" stroke-linejoin="miter"/>
<text transform="scale(0.8,1)" x="53.13 58.64 64.16 69.67 75.18 80.69 86.21 91.72 97.23 102.74 108.26 113.77 119.28 124.79 130.31 135.82 141.33 146.34 152.36 157.87 163.38" y="416.70" text-anchor="middle" font-family="Liberation Sans" font-size="9.80" font-weight="normal" fill="#000">(21)(0)(SMA)(C):9,824</text>
<line x1="7" y1="422.8" x2="15" y2="422.8" stroke="#00b000" stroke-width="1.3" stroke-dasharray="1.5 1.5"/>
<path d="M16.85,421.15 L16.85,424.21M16.85,421.15 L18.77,421.15 L18.77,424.21M17.81,419.65 L17.81,426.11M19.50,419.99 L23.19,419.99M19.95,420.74 L22.75,420.74 L22.75,422.17 L19.95,422.17 L19.95,420.74M19.50,422.85 L23.19,422.85 L23.19,426.05 L19.50,426.05 L19.50,422.85M19.50,424.41 L23.19,424.41M21.35,422.85 L21.35,426.05" fill="none" stroke="#000" stroke-width="0.95" stroke-linecap="square" stroke-linejoin="miter"/>
<path d="M27.11,420.95 L28.15,420.13 L28.15,425.57M26.82,425.57 L29.48,425.57" fill="none" stroke="#000" stroke-width="0.95" stroke-linecap="square" stroke-linejoin="miter"/>
<path d="M35.68,419.79 L35.68,425.71M35.68,422.51 L38.78,422.51M33.10,425.71 L39.30,425.71" fill="none" stroke="#000" stroke-width="0.95" stroke-linecap="square" stroke-linejoin="miter"/>
<path d="M41.45,426.11 L41.45,419.99 L43.07,419.99 L42.33,422.17 L43.22,423.53 L42.33,424.35M44.25,420.13 L47.20,420.13 L47.20,422.85 L44.25,422.85M44.25,421.49 L47.20,421.49M44.25,420.13 L44.25,425.91 L45.36,425.30M45.14,422.85 L47.72,425.98M47.20,423.53 L45.73,424.41" fill="none" stroke="#000" stroke-width="0.95" stroke-linecap="square" stroke-linejoin="miter"/>
<text transform="scale(0.8,1)" x="63.36 68.84 74.31 79.29 85.26 90.74" y="426.05" text-anchor="middle" font-family="Liberation Sans" font-size="9.80" font-weight="normal" fill="#000">(+1.00</text>
<text x="79.53" y="426.05" text-anchor="middle" font-family="Liberation Sans" font-size="9.80" fill="#000">σ</text>
<text transform="scale(0.8,1)" x="108.09 113.56 119.04 124.51 129.49 135.46 140.94 146.41" y="426.05" text-anchor="middle" font-family="Liberation Sans" font-size="9.80" font-weight="normal" fill="#000">):10,009</text>
<line x1="7" y1="432.1" x2="15" y2="432.1" stroke="#00b000" stroke-width="1.3" stroke-dasharray="1.5 1.5"/>
<path d="M16.85,430.50 L16.85,433.56M16.85,430.50 L18.77,430.50 L18.77,433.56M17.81,429.00 L17.81,435.46M19.50,429.34 L23.19,429.34M19.95,430.09 L22.75,430.09 L22.75,431.52 L19.95,431.52 L19.95,430.09M19.50,432.20 L23.19,432.20 L23.19,435.40 L19.50,435.40 L19.50,432.20M19.50,433.76 L23.19,433.76M21.35,432.20 L21.35,435.40" fill="none" stroke="#000" stroke-width="0.95" stroke-linecap="square" stroke-linejoin="miter"/>
<path d="M27.11,430.30 L28.15,429.48 L28.15,434.92M26.82,434.92 L29.48,434.92" fill="none" stroke="#000" stroke-width="0.95" stroke-linecap="square" stroke-linejoin="miter"/>
<path d="M33.10,429.48 L39.30,429.48M36.20,429.48 L36.20,435.46M36.20,431.52 L38.27,432.61" fill="none" stroke="#000" stroke-width="0.95" stroke-linecap="square" stroke-linejoin="miter"/>
<path d="M41.45,435.46 L41.45,429.34 L43.07,429.34 L42.33,431.52 L43.22,432.88 L42.33,433.70M44.25,429.48 L47.20,429.48 L47.20,432.20 L44.25,432.20M44.25,430.84 L47.20,430.84M44.25,429.48 L44.25,435.26 L45.36,434.65M45.14,432.20 L47.72,435.33M47.20,432.88 L45.73,433.76" fill="none" stroke="#000" stroke-width="0.95" stroke-linecap="square" stroke-linejoin="miter"/>
<text transform="scale(0.8,1)" x="63.36 68.84 74.31 79.29 85.26 90.74" y="435.40" text-anchor="middle" font-family="Liberation Sans" font-size="9.80" font-weight="normal" fill="#000">(-1.00</text>
<text x="79.53" y="435.40" text-anchor="middle" font-family="Liberation Sans" font-size="9.80" fill="#000">σ</text>
<text transform="scale(0.8,1)" x="108.09 113.56 119.04 124.01 129.99 135.46 140.94" y="435.40" text-anchor="middle" font-family="Liberation Sans" font-size="9.80" font-weight="normal" fill="#000">):9,639</text>
<line x1="7" y1="441.5" x2="15" y2="441.5" stroke="#c8c000" stroke-width="1.3"/>
<path d="M16.85,439.85 L16.85,442.91M16.85,439.85 L18.77,439.85 L18.77,442.91M17.81,438.35 L17.81,444.81M19.50,438.69 L23.19,438.69M19.95,439.44 L22.75,439.44 L22.75,440.87 L19.95,440.87 L19.95,439.44M19.50,441.55 L23.19,441.55 L23.19,444.75 L19.50,444.75 L19.50,441.55M19.50,443.11 L23.19,443.11M21.35,441.55 L21.35,444.75" fill="none" stroke="#000" stroke-width="0.95" stroke-linecap="square" stroke-linejoin="miter"/>
<path d="M26.23,439.85 L27.26,438.83 L29.11,438.83 L29.92,439.78 L29.62,441.21 L26.23,444.27 L30.07,444.27" fill="none" stroke="#000" stroke-width="0.95" stroke-linecap="square" stroke-linejoin="miter"/>
<path d="M35.68,438.49 L35.68,444.41M35.68,441.21 L38.78,441.21M33.10,444.41 L39.30,444.41" fill="none" stroke="#000" stroke-width="0.95" stroke-linecap="square" stroke-linejoin="miter"/>
<path d="M41.45,444.81 L41.45,438.69 L43.07,438.69 L42.33,440.87 L43.22,442.23 L42.33,443.05M44.25,438.83 L47.20,438.83 L47.20,441.55 L44.25,441.55M44.25,440.19 L47.20,440.19M44.25,438.83 L44.25,444.61 L45.36,444.00M45.14,441.55 L47.72,444.68M47.20,442.23 L45.73,443.11" fill="none" stroke="#000" stroke-width="0.95" stroke-linecap="square" stroke-linejoin="miter"/>
<text transform="scale(0.8,1)" x="63.36 68.84 74.31 79.29 85.26 90.74" y="444.75" text-anchor="middle" font-family="Liberation Sans" font-size="9.80" font-weight="normal" fill="#000">(+1.96</text>
<text x="79.53" y="444.75" text-anchor="middle" font-family="Liberation Sans" font-size="9.80" fill="#000">σ</text>
<text transform="scale(0.8,1)" x="108.09 113.56 119.04 124.51 129.49 135.46 140.94 146.41" y="444.75" text-anchor="middle" font-family="Liberation Sans" font-size="9.80" font-weight="normal" fill="#000">):10,187</text>
<line x1="7" y1="450.8" x2="15" y2="450.8" stroke="#c8c000" stroke-width="1.3"/>
<path d="M16.85,449.20 L16.85,452.26M16.85,449.20 L18.77,449.20 L18.77,452.26M17.81,447.70 L17.81,454.16M19.50,448.04 L23.19,448.04M19.95,448.79 L22.75,448.79 L22.75,450.22 L19.95,450.22 L19.95,448.79M19.50,450.90 L23.19,450.90 L23.19,454.10 L19.50,454.10 L19.50,450.90M19.50,452.46 L23.19,452.46M21.35,450.90 L21.35,454.10" fill="none" stroke="#000" stroke-width="0.95" stroke-linecap="square" stroke-linejoin="miter"/>
<path d="M26.23,449.20 L27.26,448.18 L29.11,448.18 L29.92,449.13 L29.62,450.56 L26.23,453.62 L30.07,453.62" fill="none" stroke="#000" stroke-width="0.95" stroke-linecap="square" stroke-linejoin="miter"/>
<path d="M33.10,448.18 L39.30,448.18M36.20,448.18 L36.20,454.16M36.20,450.22 L38.27,451.31" fill="none" stroke="#000" stroke-width="0.95" stroke-linecap="square" stroke-linejoin="miter"/>
<path d="M41.45,454.16 L41.45,448.04 L43.07,448.04 L42.33,450.22 L43.22,451.58 L42.33,452.40M44.25,448.18 L47.20,448.18 L47.20,450.90 L44.25,450.90M44.25,449.54 L47.20,449.54M44.25,448.18 L44.25,453.96 L45.36,453.35M45.14,450.90 L47.72,454.03M47.20,451.58 L45.73,452.46" fill="none" stroke="#000" stroke-width="0.95" stroke-linecap="square" stroke-linejoin="miter"/>
<text transform="scale(0.8,1)" x="63.36 68.84 74.31 79.29 85.26 90.74" y="454.10" text-anchor="middle" font-family="Liberation Sans" font-size="9.80" font-weight="normal" fill="#000">(-1.96</text>
<text x="79.53" y="454.10" text-anchor="middle" font-family="Liberation Sans" font-size="9.80" fill="#000">σ</text>
<text transform="scale(0.8,1)" x="108.09 113.56 119.04 124.01 129.99 135.46 140.94" y="454.10" text-anchor="middle" font-family="Liberation Sans" font-size="9.80" font-weight="normal" fill="#000">):9,461</text>
<defs><linearGradient id="btn" x1="0" y1="0" x2="0" y2="1"><stop offset="0" stop-color="#fbfbfb"/><stop offset="1" stop-color="#dcdcdc"/></linearGradient><linearGradient id="prs" x1="0" y1="0" x2="0" y2="1"><stop offset="0" stop-color="#c4c6ca"/><stop offset="1" stop-color="#e2e3e6"/></linearGradient></defs>
<rect x="8.5" y="4.5" width="10.5" height="11" fill="#f4f4f4"/>
<path d="M8.6,4.3 V15.3 H19" stroke="#7c7c7c" stroke-width="1" fill="none"/>
<polyline points="9.4,12.6 11.6,9.6 13.3,11 16.3,6 18.4,10.3" stroke="#e83a4a" stroke-width="1.6" fill="none"/>
<polyline points="9.6,11.6 11.2,10.4 13.1,10 15,8.2" stroke="#4a8af0" stroke-width="0.9" fill="none" opacity="0.8"/>
<path d="M27.40,5.94 L23.51,9.06M27.40,5.94 L31.29,9.06M25.67,9.30 L29.13,9.30M24.64,10.90 L30.16,10.90M27.40,9.30 L27.40,13.30M25.50,11.70 L26.10,12.74M29.30,11.70 L28.70,12.74M23.77,13.38 L31.03,13.38" fill="none" stroke="#1e1e1e" stroke-width="1.1" stroke-linecap="square" stroke-linejoin="miter"/>
<path d="M34.6,5.6 H32.6 V14 H34.6 M74.4,5.6 H76.4 V14 H74.4" stroke="#1e1e1e" stroke-width="1" fill="none"/>
<path d="M38.06,6.10 L37.02,8.34M37.63,7.70 L42.78,7.70M39.77,5.94 L39.77,9.70M35.91,9.70 L43.64,9.70M38.74,9.70 L38.49,11.94 L36.34,13.46M40.81,9.70 L40.81,13.06 L43.64,13.06 L43.64,12.10" fill="none" stroke="#1e1e1e" stroke-width="1.1" stroke-linecap="square" stroke-linejoin="miter"/>
<path d="M45.89,13.54 L45.89,6.34 L47.78,6.34 L46.92,8.90 L47.95,10.50 L46.92,11.46M49.15,6.50 L52.59,6.50 L52.59,9.70 L49.15,9.70M49.15,8.10 L52.59,8.10M49.15,6.50 L49.15,13.30 L50.44,12.58M50.18,9.70 L53.19,13.38M52.59,10.50 L50.87,11.54" fill="none" stroke="#1e1e1e" stroke-width="1.1" stroke-linecap="square" stroke-linejoin="miter"/>
<path d="M55.44,6.34 L56.47,7.30M54.84,8.90 L56.30,8.90 L56.30,12.10 L55.01,13.30M56.30,12.58 L57.59,13.22 L63.00,13.22M57.59,6.90 L62.74,6.90M58.19,8.10 L62.14,8.10 L62.14,10.50 L58.19,10.50 L58.19,8.10M58.19,9.30 L62.14,9.30M57.59,11.54 L62.74,11.54M60.16,5.94 L60.16,12.50" fill="none" stroke="#1e1e1e" stroke-width="1.1" stroke-linecap="square" stroke-linejoin="miter"/>
<path d="M66.28,6.10 L64.99,8.90 L67.14,8.90M66.71,7.54 L64.99,10.90 L67.57,10.50M66.28,10.50 L66.28,13.30M64.99,11.94 L64.82,12.90M67.22,11.94 L67.57,12.90M68.42,6.90 L71.86,6.90M70.14,5.94 L70.14,8.10M68.85,8.10 L71.43,8.10M68.08,10.10 L68.08,9.22 L72.38,9.22 L72.38,10.10M69.46,10.50 L68.42,13.54M71.00,10.50 L71.00,13.06 L72.55,13.06" fill="none" stroke="#1e1e1e" stroke-width="1.1" stroke-linecap="square" stroke-linejoin="miter"/>
<text x="78" y="13.5" font-family="Liberation Sans" font-size="8.8" fill="#1e1e1e" font-weight="normal" textLength="14.8" lengthAdjust="spacingAndGlyphs">1.00</text>
<path d="M96.8,10.2 H100.6" stroke="#1e1e1e" stroke-width="1.1"/>
<path d="M108.78,5.86 L108.02,7.30M106.13,7.30 L110.67,7.30 L110.67,13.38 L106.13,13.38 L106.13,7.30M106.13,10.26 L110.67,10.26" fill="none" stroke="#1e1e1e" stroke-width="1.1" stroke-linecap="square" stroke-linejoin="miter"/>
<path d="M116.80,5.94 L113.40,9.06M116.80,5.94 L120.20,9.06M115.29,9.30 L118.31,9.30M114.38,10.90 L119.22,10.90M116.80,9.30 L116.80,13.30M115.14,11.70 L115.67,12.74M118.46,11.70 L117.93,12.74M113.62,13.38 L119.98,13.38" fill="none" stroke="#1e1e1e" stroke-width="1.1" stroke-linecap="square" stroke-linejoin="miter"/>
<path d="M124.8,5.6 H122.8 V14 H124.8 M163.8,5.6 H165.8 V14 H163.8" stroke="#1e1e1e" stroke-width="1" fill="none"/>
<path d="M128.06,6.10 L127.02,8.34M127.63,7.70 L132.78,7.70M129.78,5.94 L129.78,9.70M125.91,9.70 L133.64,9.70M128.74,9.70 L128.49,11.94 L126.34,13.46M130.81,9.70 L130.81,13.06 L133.64,13.06 L133.64,12.10" fill="none" stroke="#1e1e1e" stroke-width="1.1" stroke-linecap="square" stroke-linejoin="miter"/>
<path d="M135.89,13.54 L135.89,6.34 L137.78,6.34 L136.92,8.90 L137.95,10.50 L136.92,11.46M139.15,6.50 L142.59,6.50 L142.59,9.70 L139.15,9.70M139.15,8.10 L142.59,8.10M139.15,6.50 L139.15,13.30 L140.44,12.58M140.18,9.70 L143.19,13.38M142.59,10.50 L140.87,11.54" fill="none" stroke="#1e1e1e" stroke-width="1.1" stroke-linecap="square" stroke-linejoin="miter"/>
<path d="M145.44,6.34 L146.47,7.30M144.84,8.90 L146.30,8.90 L146.30,12.10 L145.01,13.30M146.30,12.58 L147.59,13.22 L153.00,13.22M147.59,6.90 L152.74,6.90M148.19,8.10 L152.14,8.10 L152.14,10.50 L148.19,10.50 L148.19,8.10M148.19,9.30 L152.14,9.30M147.59,11.54 L152.74,11.54M150.16,5.94 L150.16,12.50" fill="none" stroke="#1e1e1e" stroke-width="1.1" stroke-linecap="square" stroke-linejoin="miter"/>
<path d="M156.28,6.10 L154.99,8.90 L157.14,8.90M156.71,7.54 L154.99,10.90 L157.57,10.50M156.28,10.50 L156.28,13.30M154.99,11.94 L154.82,12.90M157.22,11.94 L157.57,12.90M158.43,6.90 L161.86,6.90M160.14,5.94 L160.14,8.10M158.85,8.10 L161.43,8.10M158.08,10.10 L158.08,9.22 L162.38,9.22 L162.38,10.10M159.46,10.50 L158.43,13.54M161.00,10.50 L161.00,13.06 L162.55,13.06" fill="none" stroke="#1e1e1e" stroke-width="1.1" stroke-linecap="square" stroke-linejoin="miter"/>
<text x="168" y="13.5" font-family="Liberation Sans" font-size="8.8" fill="#1e1e1e" font-weight="normal" textLength="15.4" lengthAdjust="spacingAndGlyphs">1.00</text>
<rect x="952.5" y="5" width="8" height="10" rx="1.5" fill="#eeeeee" stroke="#8a8a8a" stroke-width="1"/>
<rect x="955.3" y="7" width="8" height="7.6" rx="1.5" fill="#f2f2f2" stroke="#6e6e6e" stroke-width="1.2"/>
<path d="M955.8,7.4 H963" stroke="#5a6a9a" stroke-width="1"/>
<rect x="970.2" y="3.4" width="13.4" height="13.2" rx="2" fill="url(#btn)" stroke="#9c9c9c" stroke-width="1"/>
<rect x="986.1" y="3.4" width="13.4" height="13.2" rx="2" fill="url(#btn)" stroke="#9c9c9c" stroke-width="1"/>
<rect x="1001.9" y="3.4" width="13.4" height="13.2" rx="2" fill="url(#btn)" stroke="#9c9c9c" stroke-width="1"/>
<rect x="974.4" y="11.6" width="5" height="1.2" fill="#4a4a4a"/>
<rect x="990.2" y="7.4" width="5.6" height="5.2" fill="none" stroke="#505050" stroke-width="0.95"/><rect x="990" y="7" width="6" height="1.3" fill="#505050"/>
<path d="M1005.8,7 L1011.6,12.8 M1011.6,7 L1005.8,12.8" stroke="#505050" stroke-width="1.05"/>
<path d="M13.70,23.76 L9.81,27.11M13.70,23.76 L17.59,27.11M11.97,27.37 L15.43,27.37M10.94,29.09 L16.46,29.09M13.70,27.37 L13.70,31.67M11.80,29.95 L12.40,31.07M15.60,29.95 L15.00,31.07M10.07,31.76 L17.33,31.76" fill="none" stroke="#2a2a2a" stroke-width="1.15" stroke-linecap="square" stroke-linejoin="miter"/>
<path d="M30.21,23.93 L29.19,26.34M29.78,25.65 L34.86,25.65M31.90,23.76 L31.90,27.80M28.09,27.80 L35.71,27.80M30.88,27.80 L30.63,30.21 L28.52,31.84M32.92,27.80 L32.92,31.41 L35.71,31.41 L35.71,30.38" fill="none" stroke="#2a2a2a" stroke-width="1.15" stroke-linecap="square" stroke-linejoin="miter"/>
<path d="M37.92,31.93 L37.92,24.19 L39.78,24.19 L38.93,26.94 L39.95,28.66 L38.93,29.69M41.13,24.36 L44.51,24.36 L44.51,27.80 L41.13,27.80M41.13,26.08 L44.51,26.08M41.13,24.36 L41.13,31.67 L42.40,30.90M42.15,27.80 L45.11,31.76M44.51,28.66 L42.82,29.78" fill="none" stroke="#2a2a2a" stroke-width="1.15" stroke-linecap="square" stroke-linejoin="miter"/>
<path d="M47.32,24.19 L48.33,25.22M46.72,26.94 L48.16,26.94 L48.16,30.38 L46.89,31.67M48.16,30.90 L49.43,31.58 L54.76,31.58M49.43,24.79 L54.51,24.79M50.02,26.08 L53.91,26.08 L53.91,28.66 L50.02,28.66 L50.02,26.08M50.02,27.37 L53.91,27.37M49.43,29.78 L54.51,29.78M51.97,23.76 L51.97,30.81" fill="none" stroke="#2a2a2a" stroke-width="1.15" stroke-linecap="square" stroke-linejoin="miter"/>
<path d="M57.98,23.93 L56.72,26.94 L58.83,26.94M58.41,25.48 L56.72,29.09 L59.25,28.66M57.98,28.66 L57.98,31.67M56.72,30.21 L56.55,31.24M58.92,30.21 L59.25,31.24M60.10,24.79 L63.48,24.79M61.79,23.76 L61.79,26.08M60.52,26.08 L63.06,26.08M59.76,28.23 L59.76,27.28 L63.99,27.28 L63.99,28.23M61.12,28.66 L60.10,31.93M62.64,28.66 L62.64,31.41 L64.16,31.41" fill="none" stroke="#2a2a2a" stroke-width="1.15" stroke-linecap="square" stroke-linejoin="miter"/>
<path d="M123.45,23.67 L122.65,25.22M120.65,25.22 L125.45,25.22 L125.45,31.76 L120.65,31.76 L120.65,25.22M120.65,28.40 L125.45,28.40" fill="none" stroke="#2a2a2a" stroke-width="1.15" stroke-linecap="square" stroke-linejoin="miter"/>
<path d="M131.95,23.76 L128.35,27.11M131.95,23.76 L135.55,27.11M130.35,27.37 L133.55,27.37M129.39,29.09 L134.51,29.09M131.95,27.37 L131.95,31.67M130.19,29.95 L130.75,31.07M133.71,29.95 L133.15,31.07M128.59,31.76 L135.31,31.76" fill="none" stroke="#2a2a2a" stroke-width="1.15" stroke-linecap="square" stroke-linejoin="miter"/>
<path d="M149.59,23.93 L148.58,26.34M149.17,25.65 L154.22,25.65M151.28,23.76 L151.28,27.80M147.49,27.80 L155.06,27.80M150.27,27.80 L150.01,30.21 L147.91,31.84M152.28,27.80 L152.28,31.41 L155.06,31.41 L155.06,30.38" fill="none" stroke="#2a2a2a" stroke-width="1.15" stroke-linecap="square" stroke-linejoin="miter"/>
<path d="M157.26,31.93 L157.26,24.19 L159.11,24.19 L158.27,26.94 L159.28,28.66 L158.27,29.69M160.46,24.36 L163.82,24.36 L163.82,27.80 L160.46,27.80M160.46,26.08 L163.82,26.08M160.46,24.36 L160.46,31.67 L161.72,30.90M161.47,27.80 L164.41,31.76M163.82,28.66 L162.14,29.78" fill="none" stroke="#2a2a2a" stroke-width="1.15" stroke-linecap="square" stroke-linejoin="miter"/>
<path d="M166.61,24.19 L167.62,25.22M166.02,26.94 L167.45,26.94 L167.45,30.38 L166.19,31.67M167.45,30.90 L168.71,31.58 L174.01,31.58M168.71,24.79 L173.76,24.79M169.30,26.08 L173.17,26.08 L173.17,28.66 L169.30,28.66 L169.30,26.08M169.30,27.37 L173.17,27.37M168.71,29.78 L173.76,29.78M171.24,23.76 L171.24,30.81" fill="none" stroke="#2a2a2a" stroke-width="1.15" stroke-linecap="square" stroke-linejoin="miter"/>
<path d="M177.22,23.93 L175.96,26.94 L178.06,26.94M177.64,25.48 L175.96,29.09 L178.48,28.66M177.22,28.66 L177.22,31.67M175.96,30.21 L175.79,31.24M178.15,30.21 L178.48,31.24M179.32,24.79 L182.69,24.79M181.01,23.76 L181.01,26.08M179.75,26.08 L182.27,26.08M178.99,28.23 L178.99,27.28 L183.20,27.28 L183.20,28.23M180.33,28.66 L179.32,31.93M181.85,28.66 L181.85,31.41 L183.36,31.41" fill="none" stroke="#2a2a2a" stroke-width="1.15" stroke-linecap="square" stroke-linejoin="miter"/>
<path d="M240.45,24.36 L245.25,24.36 L245.25,31.67 L240.45,31.67 L240.45,24.36M240.45,27.97 L245.25,27.97" fill="none" stroke="#2a2a2a" stroke-width="1.15" stroke-linecap="square" stroke-linejoin="miter"/>
<path d="M249.75,24.19 L253.75,24.19 L253.75,26.94 L249.75,26.94 L249.75,24.19M251.75,26.94 L251.75,30.81M251.75,28.83 L254.55,28.83M249.75,28.23 L249.75,30.81 L248.55,31.93M249.59,30.64 L250.95,31.41 L255.59,31.76" fill="none" stroke="#2a2a2a" stroke-width="1.15" stroke-linecap="square" stroke-linejoin="miter"/>
<rect x="70.4" y="20.8" width="26.599999999999994" height="13.8" fill="#ffffff"/>
<text x="72.60000000000001" y="31" font-family="Liberation Sans" font-size="11.2" fill="#222" stroke="#222" stroke-width="0.2" textLength="14.4" lengthAdjust="spacingAndGlyphs">1.00</text>
<rect x="97.4" y="21.4" width="9.799999999999997" height="11.2" fill="#f0f0f0" stroke="#b4b4b4" stroke-width="1"/>
<path d="M97.4,27.3 H107.2" stroke="#b4b4b4" stroke-width="1"/>
<path d="M100.20000000000002,25.8 L102.30000000000001,23.6 L104.4,25.8 Z M100.20000000000002,28.8 L102.30000000000001,31 L104.4,28.8 Z" fill="#111"/>
<rect x="189.4" y="20.8" width="27.19999999999999" height="13.8" fill="#ffffff"/>
<text x="191.6" y="31" font-family="Liberation Sans" font-size="11.2" fill="#222" stroke="#222" stroke-width="0.2" textLength="14.4" lengthAdjust="spacingAndGlyphs">1.00</text>
<rect x="216.8" y="21.4" width="9.5" height="11.2" fill="#f0f0f0" stroke="#b4b4b4" stroke-width="1"/>
<path d="M216.8,27.3 H226.3" stroke="#b4b4b4" stroke-width="1"/>
<path d="M219.45000000000002,25.8 L221.55,23.6 L223.65,25.8 Z M219.45000000000002,28.8 L221.55,31 L223.65,28.8 Z" fill="#111"/>
<rect x="268.6" y="20.8" width="24.799999999999955" height="13.8" fill="#ffffff"/>
<text x="270.8" y="31" font-family="Liberation Sans" font-size="11.2" fill="#222" stroke="#222" stroke-width="0.2" textLength="13.2" lengthAdjust="spacingAndGlyphs">100</text>
<rect x="293.6" y="21.4" width="9.899999999999977" height="11.2" fill="#f0f0f0" stroke="#b4b4b4" stroke-width="1"/>
<path d="M293.6,27.3 H303.5" stroke="#b4b4b4" stroke-width="1"/>
<path d="M296.45,25.8 L298.55,23.6 L300.65000000000003,25.8 Z M296.45,28.8 L298.55,31 L300.65000000000003,28.8 Z" fill="#111"/>
<path d="M112.6,22.5 V33.5" stroke="#f4f6f8" stroke-width="1.2"/><path d="M113.6,22.5 V33.5" stroke="#b8bec8" stroke-width="0.6"/>
<path d="M232.2,22.5 V33.5" stroke="#f4f6f8" stroke-width="1.2"/><path d="M233.2,22.5 V33.5" stroke="#b8bec8" stroke-width="0.6"/>
<path d="M308.9,22.5 V33.5" stroke="#f4f6f8" stroke-width="1.2"/><path d="M309.9,22.5 V33.5" stroke="#b8bec8" stroke-width="0.6"/>
<path d="M331.8,22.5 V33.5" stroke="#f4f6f8" stroke-width="1.2"/><path d="M332.8,22.5 V33.5" stroke="#b8bec8" stroke-width="0.6"/>
<path d="M410.2,22.5 V33.5" stroke="#f4f6f8" stroke-width="1.2"/><path d="M411.2,22.5 V33.5" stroke="#b8bec8" stroke-width="0.6"/>
<path d="M456.2,22.5 V33.5" stroke="#f4f6f8" stroke-width="1.2"/><path d="M457.2,22.5 V33.5" stroke="#b8bec8" stroke-width="0.6"/>
<path d="M261.3,26.4 H265.3 L263.3,28.7 Z" fill="#111"/>
<path d="M427.4,26.4 H431.4 L429.4,28.7 Z" fill="#111"/>
<rect x="311.2" y="20.2" width="13.6" height="14" fill="url(#prs)" stroke="#a6a8ac" stroke-width="1"/>
<rect x="312.8" y="21.8" width="10.6" height="11" fill="#ebebee"/>
<rect x="334.4" y="20.2" width="13.6" height="14" fill="url(#prs)" stroke="#a6a8ac" stroke-width="1"/>
<rect x="336.0" y="21.8" width="10.6" height="11" fill="#ebebee"/>
<path d="M315.5,22.6 V33" stroke="#7a4cc8" stroke-width="1.1" stroke-dasharray="1 0.6"/><path d="M312.2,25.3 H324" stroke="#6a5ac8" stroke-width="1" stroke-dasharray="1 0.6"/>
<path d="M317.8,27 L317.8,33 L319.3,31.6 L321,33.6 L322.6,32.8 L321,30.6 L322.8,30.2 Z" fill="#b47ee0" stroke="#9050c8" stroke-width="0.6"/>
<path d="M337.2,22.8 L337.8,32.4 L340.4,30 L343.2,33.6 L345.4,32 L342.6,28.6 L345.8,28 Z" fill="#f8f8ff" stroke="#7a5ae0" stroke-width="1.3" stroke-linejoin="round"/>
<path d="M338.4,25 L339,30.4 L341.2,28.6 L343.6,31.8" stroke="#dde4ff" stroke-width="1" fill="none"/>
<path d="M353.6,27.8 C352.8,26 354,24.6 355.4,25.2 L355.6,22.6 C356,21.2 357.8,21.4 358,22.6 C358.4,21 360.4,21 360.6,22.6 C361.2,21.6 363,22 363,23.4 L363.8,23.8 C365,24.4 364.8,27 364.4,29 C364,31.6 362.4,34 359.2,34 C356.2,34 355.2,32 354.4,30.2 Z" fill="#e6a65a"/>
<path d="M355.8,28.2 C356.6,26.6 358.4,25.4 360.2,25.8 C362,26.2 362.4,28.6 361.8,30.6 C361.2,32.2 359.4,32.8 358,32.4 C356.8,31.8 356.2,30 355.8,28.2 Z" fill="#fbf6ee"/>
<path d="M356.8,32.6 L357.6,33.6" stroke="#f0e040" stroke-width="1"/>
<path d="M371.6,32.2 L380.4,22.6 L383.6,25.2 L374.6,34.4 Z" fill="#e9b060"/><path d="M373.4,31.6 L381.6,23.6" stroke="#f8e878" stroke-width="1.1" stroke-dasharray="1.2 1.4"/><path d="M371.6,32.4 L372.6,34.6 L374.4,34.2" stroke="#6a7040" stroke-width="1" fill="none"/>
<path d="M390.2,32.6 L399,22.6 L402.2,25.2 L393.6,34.4 Z" fill="#5a9aee"/><path d="M391.8,32 L400,23.6" stroke="#e0ecff" stroke-width="1"/>
<path d="M395.6,29.6 L398.8,26.4 L401.4,29.2 L398.4,32.6 Z" fill="#1e3c98"/>
<rect x="414.2" y="22.4" width="10.4" height="10.2" fill="#eef0f4"/><path d="M414.59999999999997,22.4 V32.8 H425.0" stroke="#8c8c8c" stroke-width="0.8" fill="none"/>
<rect x="415.4" y="28.3" width="1.6" height="4.1" fill="#2a86f0"/>
<rect x="417.4" y="23.9" width="1.6" height="8.5" fill="#2a86f0"/>
<rect x="419.59999999999997" y="25.6" width="1.6" height="6.8" fill="#2a86f0"/>
<rect x="421.8" y="27.4" width="1.6" height="5.0" fill="#2a86f0"/>
<rect x="436.2" y="22.4" width="10.4" height="10.2" fill="#eef0f4"/><path d="M436.59999999999997,22.4 V32.8 H447.0" stroke="#8c8c8c" stroke-width="0.8" fill="none"/>
<rect x="437.4" y="28.3" width="1.6" height="4.1" fill="#2a86f0"/>
<rect x="439.4" y="23.9" width="1.6" height="8.5" fill="#2a86f0"/>
<rect x="441.59999999999997" y="25.6" width="1.6" height="6.8" fill="#2a86f0"/>
<rect x="443.8" y="27.4" width="1.6" height="5.0" fill="#2a86f0"/>
<path d="M437.4,23.4 L445.6,31.6 M445.8,23.2 L437.6,31.6" stroke="#f05a6a" stroke-width="1.2"/>
<path d="M466.2,23.6 A4.6,4.6 0 1 0 466.6,31.6" stroke="#1e7ef0" stroke-width="1.9" fill="none"/>
<path d="M463.2,21.4 L466.8,23.4 L463.4,25.6 Z" fill="#1e7ef0"/>
<text x="465.2" y="30" font-family="Liberation Sans" font-weight="bold" font-size="7" fill="#1e6ed8">R</text>
<path d="M998,34 L1005,27" stroke="#5a7ae8" stroke-width="2.4"/>
<path d="M1004.2,27.4 C1002.8,25.6 1003.8,22.8 1006.4,22.4 L1005.4,24.6 L1007,25.8 L1008.8,24.4 C1009.4,26.8 1007.2,28.8 1004.8,28" fill="none" stroke="#7a9af0" stroke-width="1.3"/>
<path d="M999.4,33.6 L1000.4,35" stroke="#a050c0" stroke-width="1"/>
</svg>
</body></html>
